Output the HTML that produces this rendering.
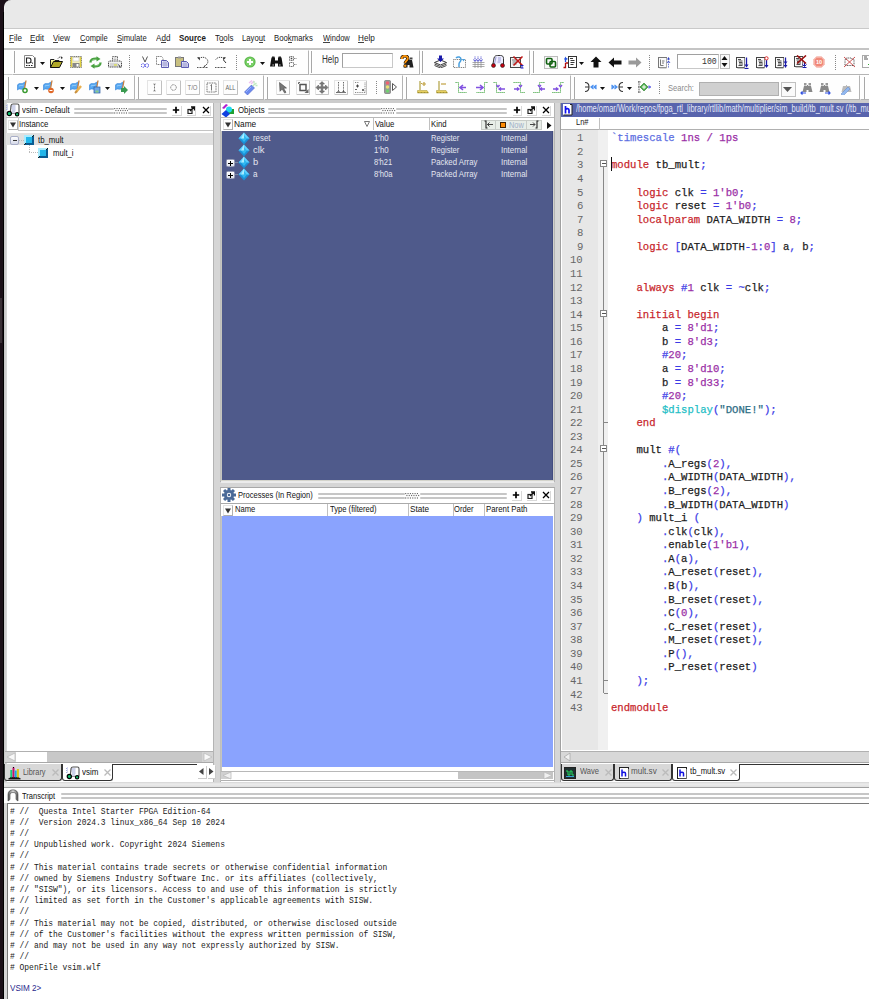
<!DOCTYPE html><html><head><meta charset="utf-8"><style>
*{margin:0;padding:0;box-sizing:border-box}
html,body{width:869px;height:999px;overflow:hidden;background:#d6d6d6;position:relative}
body>div,body>svg{position:absolute}
.t{white-space:pre;transform-origin:0 0;line-height:0;height:0}
i{font-style:normal}
</style></head><body>
<div style="left:0px;top:0px;width:869px;height:28px;background:#e9e9e9"></div>
<div style="left:0px;top:28px;width:869px;height:1px;background:#c9c9c9"></div>
<div style="left:0px;top:29px;width:869px;height:19px;background:#ffffff"></div>
<div style="left:0px;top:48px;width:869px;height:2px;background:#c4c4c4"></div>
<div style="left:0px;top:50px;width:869px;height:51px;background:#fefefe"></div>
<div style="left:0px;top:74px;width:869px;height:1px;background:#c8c8c8"></div>
<div style="left:0px;top:100px;width:869px;height:3px;background:#cccccc"></div>
<div class="t" style="left:8.55px;top:37.67px;font-size:9.9px;color:#1a1a1a;font-family:'Liberation Sans';transform:scaleX(0.8162);">File</div>
<div style="left:9px;top:42px;width:5px;height:1px;background:#444"></div>
<div class="t" style="left:29.75px;top:37.67px;font-size:9.9px;color:#1a1a1a;font-family:'Liberation Sans';transform:scaleX(0.8217);">Edit</div>
<div style="left:30px;top:42px;width:5px;height:1px;background:#444"></div>
<div class="t" style="left:53.36px;top:37.67px;font-size:9.9px;color:#1a1a1a;font-family:'Liberation Sans';transform:scaleX(0.7911);">View</div>
<div style="left:53px;top:42px;width:5px;height:1px;background:#444"></div>
<div class="t" style="left:79.62px;top:37.67px;font-size:9.9px;color:#1a1a1a;font-family:'Liberation Sans';transform:scaleX(0.7639);">Compile</div>
<div style="left:80px;top:42px;width:6px;height:1px;background:#444"></div>
<div class="t" style="left:116.66px;top:37.67px;font-size:9.9px;color:#1a1a1a;font-family:'Liberation Sans';transform:scaleX(0.7709);">Simulate</div>
<div style="left:117px;top:42px;width:5px;height:1px;background:#444"></div>
<div class="t" style="left:156.00px;top:37.67px;font-size:9.9px;color:#1a1a1a;font-family:'Liberation Sans';transform:scaleX(0.8187);">Add</div>
<div style="left:161px;top:42px;width:5px;height:1px;background:#444"></div>
<div class="t" style="left:179.06px;top:37.67px;font-size:9.9px;color:#1a1a1a;font-family:'Liberation Sans';font-weight:bold;transform:scaleX(0.8020);">Source</div>
<div style="left:194px;top:42px;width:3px;height:1px;background:#444"></div>
<div class="t" style="left:214.84px;top:37.67px;font-size:9.9px;color:#1a1a1a;font-family:'Liberation Sans';transform:scaleX(0.7974);">Tools</div>
<div style="left:220px;top:42px;width:4px;height:1px;background:#444"></div>
<div class="t" style="left:242.18px;top:37.67px;font-size:9.9px;color:#1a1a1a;font-family:'Liberation Sans';transform:scaleX(0.7797);">Layout</div>
<div style="left:259px;top:42px;width:4px;height:1px;background:#444"></div>
<div class="t" style="left:274.38px;top:37.67px;font-size:9.9px;color:#1a1a1a;font-family:'Liberation Sans';transform:scaleX(0.7857);">Bookmarks</div>
<div style="left:288px;top:42px;width:4px;height:1px;background:#444"></div>
<div class="t" style="left:322.66px;top:37.67px;font-size:9.9px;color:#1a1a1a;font-family:'Liberation Sans';transform:scaleX(0.7615);">Window</div>
<div style="left:323px;top:42px;width:7px;height:1px;background:#444"></div>
<div class="t" style="left:357.85px;top:37.67px;font-size:9.9px;color:#1a1a1a;font-family:'Liberation Sans';transform:scaleX(0.8248);">Help</div>
<div style="left:358px;top:42px;width:6px;height:1px;background:#444"></div>
<div style="left:11.5px;top:50px;width:297.5px;height:25px;border-left:1px solid #fff;border-top:1px solid #fff;border-right:1px solid #b4b4b4;border-bottom:1px solid #b4b4b4"></div>
<div style="left:309px;top:50px;width:111px;height:25px;border-left:1px solid #fff;border-top:1px solid #fff;border-right:1px solid #b4b4b4;border-bottom:1px solid #b4b4b4"></div>
<div style="left:420px;top:50px;width:110px;height:25px;border-left:1px solid #fff;border-top:1px solid #fff;border-right:1px solid #b4b4b4;border-bottom:1px solid #b4b4b4"></div>
<div style="left:530px;top:50px;width:350px;height:25px;border-left:1px solid #fff;border-top:1px solid #fff;border-right:1px solid #b4b4b4;border-bottom:1px solid #b4b4b4"></div>
<div style="left:13.5px;top:51px;width:2px;height:22px;border-left:1px solid #a8a8a8;border-right:1px solid #fff"></div>
<div style="left:311px;top:51px;width:2px;height:22px;border-left:1px solid #a8a8a8;border-right:1px solid #fff"></div>
<div style="left:422px;top:51px;width:2px;height:22px;border-left:1px solid #a8a8a8;border-right:1px solid #fff"></div>
<div style="left:533px;top:51px;width:2px;height:22px;border-left:1px solid #a8a8a8;border-right:1px solid #fff"></div>
<div style="left:5.5px;top:75px;width:129.5px;height:25px;border-left:1px solid #fff;border-top:1px solid #fff;border-right:1px solid #b4b4b4;border-bottom:1px solid #b4b4b4"></div>
<div style="left:135px;top:75px;width:129px;height:25px;border-left:1px solid #fff;border-top:1px solid #fff;border-right:1px solid #b4b4b4;border-bottom:1px solid #b4b4b4"></div>
<div style="left:264px;top:75px;width:139px;height:25px;border-left:1px solid #fff;border-top:1px solid #fff;border-right:1px solid #b4b4b4;border-bottom:1px solid #b4b4b4"></div>
<div style="left:403px;top:75px;width:168px;height:25px;border-left:1px solid #fff;border-top:1px solid #fff;border-right:1px solid #b4b4b4;border-bottom:1px solid #b4b4b4"></div>
<div style="left:571px;top:75px;width:289px;height:25px;border-left:1px solid #fff;border-top:1px solid #fff;border-right:1px solid #b4b4b4;border-bottom:1px solid #b4b4b4"></div>
<div style="left:860px;top:75px;width:20px;height:25px;border-left:1px solid #fff;border-top:1px solid #fff;border-right:1px solid #b4b4b4;border-bottom:1px solid #b4b4b4"></div>
<div style="left:7.5px;top:77px;width:2px;height:22px;border-left:1px solid #a8a8a8;border-right:1px solid #fff"></div>
<div style="left:137.5px;top:77px;width:2px;height:22px;border-left:1px solid #a8a8a8;border-right:1px solid #fff"></div>
<div style="left:266.5px;top:77px;width:2px;height:22px;border-left:1px solid #a8a8a8;border-right:1px solid #fff"></div>
<div style="left:405.5px;top:77px;width:2px;height:22px;border-left:1px solid #a8a8a8;border-right:1px solid #fff"></div>
<div style="left:574px;top:77px;width:2px;height:22px;border-left:1px solid #a8a8a8;border-right:1px solid #fff"></div>
<div style="left:864px;top:77px;width:2px;height:22px;border-left:1px solid #a8a8a8;border-right:1px solid #fff"></div>
<div style="left:129px;top:55px;width:1px;height:15px;background:repeating-linear-gradient(#888 0 1px,transparent 1px 2px)"></div>
<div style="left:236px;top:55px;width:1px;height:15px;background:repeating-linear-gradient(#888 0 1px,transparent 1px 2px)"></div>
<div style="left:649px;top:55px;width:1px;height:15px;background:repeating-linear-gradient(#888 0 1px,transparent 1px 2px)"></div>
<div style="left:834.5px;top:55px;width:1px;height:15px;background:repeating-linear-gradient(#888 0 1px,transparent 1px 2px)"></div>
<div style="left:375.5px;top:81px;width:1px;height:14px;background:repeating-linear-gradient(#888 0 1px,transparent 1px 2px)"></div>
<div style="left:659px;top:81px;width:1px;height:14px;background:repeating-linear-gradient(#888 0 1px,transparent 1px 2px)"></div>
<svg style="left:24px;top:55px" width="12" height="13" viewBox="0 0 12 13" shape-rendering="auto"><path d="M.5 .5h8l2 2v10h-10z" fill="#fff" stroke="#8a8a8a"/><path d="M11 2.5v10.5H1.5" fill="none" stroke="#444" stroke-width="1.2"/><path d="M2.5 3h2.5q2 0 2 2.5t-2 2.5h-2.5z" fill="none" stroke="#222" stroke-width="1.1"/><path d="M7.5 7.5l1.5 1" stroke="#222"/><path d="M2 10.5h6.5" stroke="#222" stroke-dasharray="1.5 1"/></svg>
<svg style="left:40px;top:62px" width="5" height="3" viewBox="0 0 5 3" shape-rendering="auto"><path d="M0 0h5l-2.5 3z" fill="#111"/></svg>
<svg style="left:49.5px;top:56px" width="13" height="12" viewBox="0 0 13 12" shape-rendering="auto"><path d="M.5 3.5h3.5l1 1h4v2" fill="#e8e860" stroke="#222"/><path d="M.5 3.5v8" stroke="#222"/><path d="M1 4.5h3.5v7H1z" fill="#f0f080"/><path d="M.5 11.5l3-6h9l-3 6z" fill="#b0a828" stroke="#111"/><path d="M8 2.5c1-1.5 2.5-2 4-1" fill="none" stroke="#333" stroke-dasharray="1 .6"/><path d="M11 .5l1.8 1.2-1.3 1.6z" fill="#111"/></svg>
<svg style="left:70px;top:55.5px" width="12" height="12" viewBox="0 0 12 12" shape-rendering="auto"><rect x=".5" y=".5" width="11" height="11" fill="#f4f0c0" stroke="#777" stroke-dasharray="1.2 .6"/><path d="M1.5 1v10M10.5 1v10" stroke="#e0d040" stroke-width="1.4"/><rect x="3" y="1.5" width="6" height="3.5" fill="#fff" stroke="#bbb" stroke-width=".5"/><rect x="2.5" y="7" width="7" height="4" fill="#888"/><rect x="6.5" y="8" width="2" height="2.5" fill="#fff"/></svg>
<svg style="left:88.5px;top:55.5px" width="13" height="13" viewBox="0 0 13 13" shape-rendering="auto"><path d="M1.5 6.5C1.5 3.5 4 2.5 8 2.8" fill="none" stroke="#48a040" stroke-width="2.4"/><path d="M7.5 .2l4 2.8-4 2.6z" fill="#48a040"/><path d="M11.5 6.5c0 3-2.5 4-6.5 3.7" fill="none" stroke="#48a040" stroke-width="2.4"/><path d="M5.5 12.8l-4-2.8 4-2.6z" fill="#48a040"/><path d="M2.5 5.5C3 4 4.5 3.3 7.5 3.3M10.5 7.5C10 9 8.5 9.7 5.5 9.7" fill="none" stroke="#a8e0a0" stroke-width=".7"/></svg>
<svg style="left:107.5px;top:55.5px" width="14" height="13" viewBox="0 0 14 13" shape-rendering="auto"><path d="M4.5 4.5V.5h5v4" fill="#fff" stroke="#555" stroke-dasharray="1 .6"/><path d="M5.5 2h3M5.5 3.5h3" stroke="#888" stroke-width=".6"/><path d="M2 5h10q1.5 0 1.5 1.5v4.5h-13v-4.5Q.5 5 2 5z" fill="#f0f0f0" stroke="#444" stroke-dasharray="1.2 .6"/><path d="M3 7v4M5 7v4M7 7v4M9 7v4" stroke="#999" stroke-width=".6"/><path d="M6 9h3" stroke="#e0e040" stroke-width="1.2"/><path d="M10.5 8.5l2 3" stroke="#333"/></svg>
<svg style="left:140.5px;top:55.5px" width="8" height="12" viewBox="0 0 8 12" shape-rendering="auto"><path d="M1.5 .5l2.5 5.5M6.5 .5L4 6" stroke="#555"/><circle cx="2" cy="9.5" r="1.8" fill="none" stroke="#2a2ae0" stroke-dasharray="1 .8"/><circle cx="6" cy="9.5" r="1.8" fill="none" stroke="#2a2ae0" stroke-dasharray="1 .8"/></svg>
<svg style="left:156px;top:55.5px" width="14" height="12" viewBox="0 0 14 12" shape-rendering="auto"><path d="M.5 .5h5l1.5 1.5v6.5h-6.5z" fill="#fff" stroke="#777" stroke-dasharray="1 .6"/><path d="M5.5 4.5h5l2 2v5h-7z" fill="#eef0ff" stroke="#5a5ab0"/><path d="M6 7h6M6 9h6M8 5v6.5M10 5v6.5" stroke="#8080c0" stroke-width=".6"/></svg>
<svg style="left:175px;top:55.5px" width="14" height="12" viewBox="0 0 14 12" shape-rendering="auto"><rect x=".5" y="1.5" width="8" height="9" fill="#c8c080" stroke="#777"/><rect x="3" y=".5" width="3" height="2" fill="#999"/><path d="M6.5 5.5h5l2 2v4h-7z" fill="#eef0ff" stroke="#5a5ab0"/><path d="M7 8h6M7 10h6M9 6v5.5M11 6v5.5" stroke="#8080c0" stroke-width=".6"/></svg>
<svg style="left:196px;top:55.5px" width="13" height="12" viewBox="0 0 13 12" shape-rendering="auto"><path d="M3 2.5c3-2 7-1.5 8.5 1.5 1 2 0 4-2 5.5" fill="none" stroke="#444" stroke-dasharray="1.2 .8"/><path d="M1 1.5l3 3-.5-3.5z" fill="#333"/><path d="M1 11.5h11" stroke="#555" stroke-dasharray="1 .5"/><path d="M9.5 9l-1.5 2" stroke="#333"/></svg>
<svg style="left:214px;top:55.5px" width="13" height="12" viewBox="0 0 13 12" shape-rendering="auto"><path d="M10 2.5c-3-2-7-1.5-8.5 1.5" fill="none" stroke="#444" stroke-dasharray="1.2 .8"/><path d="M12 1.5l-3 3 .5-3.5z" fill="#333"/><path d="M9.5 4l2.5 3" stroke="#333"/><path d="M1 11.5h11" stroke="#555" stroke-dasharray="1 .5"/></svg>
<svg style="left:243.5px;top:56px" width="12" height="12" viewBox="0 0 12 12" shape-rendering="auto"><circle cx="6" cy="6" r="5.6" fill="#5ab84a"/><circle cx="6" cy="6" r="4.5" fill="#7cd06a"/><path d="M6 3v6M3 6h6" stroke="#fff" stroke-width="2"/></svg>
<svg style="left:260px;top:62px" width="5" height="3" viewBox="0 0 5 3" shape-rendering="auto"><path d="M0 0h5l-2.5 3z" fill="#111"/></svg>
<svg style="left:269.5px;top:56px" width="13" height="12" viewBox="0 0 13 12" shape-rendering="auto"><path d="M1.5 1.5h3.5v3h3v-3h3.5l1.5 9h-5v-3h-3v3h-5z" fill="#111"/><circle cx="3.2" cy="9" r="1" fill="#777"/><circle cx="9.8" cy="9" r="1" fill="#777"/><rect x="2" y=".5" width="2.5" height="1.5" fill="#222"/><rect x="8.5" y=".5" width="2.5" height="1.5" fill="#222"/></svg>
<svg style="left:288.5px;top:56px" width="12" height="12" viewBox="0 0 12 12" shape-rendering="auto"><rect x=".5" y=".5" width="4" height="4" fill="none" stroke="#666" stroke-dasharray="1 .6"/><rect x="1.7" y="1.7" width="1.6" height="1.6" fill="#444"/><path d="M5 2.5h3" stroke="#888" stroke-dasharray="1 .5"/><rect x=".5" y="6.5" width="4" height="4" fill="none" stroke="#666" stroke-dasharray="1 .6"/><path d="M5 8.5h3" stroke="#888" stroke-dasharray="1 .5"/></svg>
<div class="t" style="left:321.85px;top:60.43px;font-size:10.01px;color:#333;font-family:'Liberation Sans';transform:scaleX(0.8106);">Help</div>
<div style="left:342px;top:53px;width:51px;height:15px;background:#fff;border:1px solid #c8c8c8;border-top-color:#a0a0a0;border-left-color:#a0a0a0"></div>
<svg style="left:399.5px;top:55px" width="14" height="13" viewBox="0 0 14 13" shape-rendering="auto"><path d="M5.5 5h2.5v-1h1.5v1h2.5l1.5 7.5h-4v-2.5h-2v2.5h-4z" fill="#222"/><rect x="6" y="2.5" width="2.5" height="2" fill="#444"/><rect x="10" y="2.5" width="2.5" height="2" fill="#444"/><path d="M1.8 4C1.8 1.8 3.3 1 4.8 1s3 .9 3 2.6c0 2.2-2.6 2.3-2.6 4.6" fill="none" stroke="#000" stroke-width="3.2"/><path d="M1.8 4C1.8 1.8 3.3 1 4.8 1s3 .9 3 2.6c0 2.2-2.6 2.3-2.6 4.6" fill="none" stroke="#f4900c" stroke-width="2"/><circle cx="5.2" cy="10.8" r="1.6" fill="#f4900c" stroke="#222" stroke-width=".6"/></svg>
<svg style="left:433.5px;top:55px" width="13" height="13" viewBox="0 0 13 13" shape-rendering="auto"><path d="M.5 7.5l6-2.5 6 2.5-6 2.5z" fill="#fff" stroke="#222" stroke-width=".9"/><path d="M.5 9l6 2.5 6-2.5M.5 10.5l6 2.5 6-2.5" fill="none" stroke="#333" stroke-width=".9"/><path d="M5 .5h3v3h2l-3.5 3.5L3 3.5h2z" fill="#1818a8"/></svg>
<svg style="left:452.5px;top:55.5px" width="13" height="12" viewBox="0 0 13 12" shape-rendering="auto"><rect x=".5" y="3.5" width="12" height="8" fill="none" stroke="#777" stroke-dasharray="1 .8"/><path d="M3 2c2-2 5-1 5 1.5S6 6 6 8v3" fill="none" stroke="#48a0e0" stroke-width="1.5"/><path d="M9 3l3 0-1.5 2.5" fill="#48a0e0"/></svg>
<svg style="left:471.5px;top:55.5px" width="13" height="12" viewBox="0 0 13 12" shape-rendering="auto"><path d="M.5 6.5h12M.5 8.5h12M.5 10.5h12M3 6v6M6 6v6M9 6v6" stroke="#888" stroke-width=".7"/><path d="M3 .5v4M6 .5v4M9 .5v4" stroke="#5050d0" stroke-dasharray="1 .6"/><path d="M1.5 3.5l1.5 2 1.5-2M4.5 3.5l1.5 2 1.5-2M7.5 3.5l1.5 2 1.5-2" fill="none" stroke="#5050d0"/></svg>
<svg style="left:490.5px;top:55px" width="14" height="13" viewBox="0 0 14 13" shape-rendering="auto"><path d="M2 9l1-6c.5-2 2-2.5 3.5-2.5h3c2 0 3 1 3 3v6" fill="#eef" stroke="#333"/><path d="M5 2l-1.5 7M7 3h3M7 5h3M6.5 7h3" stroke="#8888cc" stroke-width=".8"/><circle cx="2.5" cy="10.5" r="2" fill="#c00010" stroke="#222" stroke-width=".6"/><circle cx="11.5" cy="10.5" r="2" fill="#c00010" stroke="#222" stroke-width=".6"/></svg>
<svg style="left:509.5px;top:55.5px" width="14" height="13" viewBox="0 0 14 13" shape-rendering="auto"><rect x=".5" y="1.5" width="10" height="10" fill="#f4f4f4" stroke="#444"/><path d="M2 4h5M2.5 6h5M2.5 8h4" stroke="#555" stroke-width=".8"/><path d="M3.5 .5l9 9M12.5 .5l-9 9" stroke="#c01818" stroke-width="1.5"/><path d="M10.5 9.5h3M10.5 12h3M12 9.5v2.5" stroke="#2020c0"/></svg>
<svg style="left:543.5px;top:55.5px" width="14" height="13" viewBox="0 0 14 13" shape-rendering="auto"><rect x=".5" y=".5" width="13" height="12" fill="#f8f8f8" stroke="#bbb"/><rect x="2.5" y="2.5" width="5.5" height="5.5" rx="1" fill="none" stroke="#106010" stroke-width="1.6"/><rect x="6" y="5.5" width="5.5" height="5.5" rx="1" fill="none" stroke="#106010" stroke-width="1.6"/></svg>
<svg style="left:562.5px;top:55.5px" width="14" height="13" viewBox="0 0 14 13" shape-rendering="auto"><rect x="5.5" y=".5" width="8" height="11" fill="#fff" stroke="#333"/><path d="M7 2.5h3M7.5 4.5h4M7.5 6.5h4M7.5 8.5h3" stroke="#222" stroke-width=".9"/><path d="M2.5 6V2.8h2" fill="none" stroke="#2050e0" stroke-width="1.3"/><path d="M1 3.5l1.5-3 1.5 3z" fill="#2050e0"/><path d="M2.5 7v4.5H.5M2.5 7h2.5" fill="none" stroke="#b01010" stroke-width="1.3"/></svg>
<svg style="left:579px;top:62px" width="5" height="3" viewBox="0 0 5 3" shape-rendering="auto"><path d="M0 0h5l-2.5 3z" fill="#111"/></svg>
<svg style="left:590px;top:56px" width="12" height="12" viewBox="0 0 12 12" shape-rendering="auto"><path d="M6 .5l5.5 5.5h-3v5.5h-5v-5.5h-3z" fill="#111"/></svg>
<svg style="left:608px;top:56.5px" width="14" height="11" viewBox="0 0 14 11" shape-rendering="auto"><path d="M.5 5.5l5.5-5v3h7.5v4h-7.5v3z" fill="#111"/></svg>
<svg style="left:627.5px;top:56.5px" width="14" height="11" viewBox="0 0 14 11" shape-rendering="auto"><path d="M13.5 5.5l-5.5-5v3h-7.5v4h7.5v3z" fill="#999"/></svg>
<svg style="left:657.5px;top:55.5px" width="13" height="13" viewBox="0 0 13 13" shape-rendering="auto"><rect x=".5" y="1.5" width="8" height="10" fill="#fafafa" stroke="#777"/><path d="M8.5 2v10H1.5" fill="none" stroke="#aaa"/><path d="M2.5 3.5v6h3M4 5h2.5M4 7h2" fill="none" stroke="#555" stroke-width=".8"/><path d="M10.5 3v9" stroke="#6070d0" stroke-dasharray="1 .7"/><path d="M9 3.5l1.5-2.5 1.5 2.5z" fill="#3040c0"/><path d="M9 7l1.5-2 1.5 2" fill="none" stroke="#3040c0" stroke-width=".8"/></svg>
<div style="left:676.5px;top:53.5px;width:42px;height:15.5px;background:#fff;border:1px solid #c8c8c8;border-top-color:#a0a0a0;border-left-color:#a0a0a0"></div>
<div class="t" style="left:702.03px;top:62.27px;font-size:9.5px;color:#333;font-family:'Liberation Mono';transform:scaleX(0.8635);">100</div>
<div style="left:719.5px;top:53.5px;width:10px;height:15.5px;background:#fafafa;border:1px solid #bbb"></div>
<svg style="left:720px;top:54px" width="9" height="15" viewBox="0 0 9 15"><path d="M1.5 6l3-4 3 4z M1.5 9l3 4 3-4z" fill="#111"/></svg>
<svg style="left:736px;top:55.5px" width="13" height="13" viewBox="0 0 13 13" shape-rendering="auto"><rect x=".5" y="1.5" width="8" height="10" fill="#fafafa" stroke="#444"/><path d="M8.5 2v10H1.5" fill="none" stroke="#888"/><path d="M2 3.5h3M2.5 5h4M3 6.5h3.5M3 8h4M2.5 9.5h4" stroke="#222" stroke-width=".8"/><path d="M10.5 1.5v9" stroke="#1a1aa8" stroke-width="1.3"/><path d="M8.5 8.5l2 3 2-3z" fill="#1a1aa8"/><path d="M8.5 12.5h4" stroke="#1a1aa8" stroke-width="1.2"/></svg>
<svg style="left:755.5px;top:55.5px" width="13" height="13" viewBox="0 0 13 13" shape-rendering="auto"><rect x=".5" y="1.5" width="8" height="10" fill="#fafafa" stroke="#444"/><path d="M8.5 2v10H1.5" fill="none" stroke="#888"/><path d="M2 3.5h3M2.5 5h4M3 6.5h3.5M3 8h4M2.5 9.5h4" stroke="#222" stroke-width=".8"/><path d="M10.5 4v6.5" stroke="#1a1aa8" stroke-width="1.3"/><path d="M8.5 9l2 3 2-3z" fill="#1a1aa8"/><circle cx="10.5" cy="2.3" r="1.6" fill="#fff" stroke="#e03030"/></svg>
<svg style="left:775px;top:55.5px" width="13" height="13" viewBox="0 0 13 13" shape-rendering="auto"><rect x=".5" y="1.5" width="8" height="10" fill="#fafafa" stroke="#444"/><path d="M8.5 2v10H1.5" fill="none" stroke="#888"/><path d="M2 3.5h3M2.5 5h4M3 6.5h3.5M3 8h4M2.5 9.5h4" stroke="#222" stroke-width=".8"/><path d="M10.5 1.5v10" stroke="#1a1aa8" stroke-width="1.3"/><path d="M8.5 5.5l2 2.5 2-2.5zM8.5 9l2 2.5 2-2.5z" fill="#1a1aa8"/></svg>
<svg style="left:793.5px;top:55px" width="13" height="13" viewBox="0 0 13 13" shape-rendering="auto"><rect x=".5" y="1.5" width="8" height="10" fill="#fafafa" stroke="#444"/><path d="M8.5 2v10H1.5" fill="none" stroke="#888"/><path d="M2 3.5h3M2.5 5h4M3 6.5h3.5M3 8h4M2.5 9.5h4" stroke="#222" stroke-width=".8"/><path d="M10.5 7v4" stroke="#1a1aa8" stroke-width="1.2"/><path d="M8.5 12.5h4M8.5 9.5l2 2 2-2" stroke="#1a1aa8" fill="none"/><path d="M3 .5l9 8M12 .5l-9 8" stroke="#9a1010" stroke-width="1.6"/></svg>
<svg style="left:812.5px;top:56px" width="12" height="12" viewBox="0 0 12 12" shape-rendering="auto"><path d="M3.5.5h5l3 3v5l-3 3h-5l-3-3v-5z" fill="#f08878"/><path d="M3.8 1.3h4.4l2.5 2.5v4.4l-2.5 2.5H3.8L1.3 8.2V3.8z" fill="none" stroke="#fff" stroke-width=".6" opacity=".7"/><text x="6" y="8" font-size="5.5" font-family="Liberation Sans" fill="#fff" text-anchor="middle" font-weight="bold">10</text></svg>
<svg style="left:843px;top:56px" width="13" height="12" viewBox="0 0 13 12" shape-rendering="auto"><path d="M3.5 2h5l1 1.5h1.5v6H2V3.5h1.5z" fill="none" stroke="#555" stroke-dasharray="1 .7"/><path d="M1 1l11 10M12 1L1 11" stroke="#c84040" stroke-width=".9"/></svg>
<svg style="left:861.5px;top:55px" width="9" height="13" viewBox="0 0 9 13" shape-rendering="auto"><rect x=".5" y=".5" width="8" height="12" fill="#fff" stroke="#aaa"/><path d="M2 2h3M2 4h4" stroke="#555"/><path d="M6 9l3 3" stroke="#3a3"/></svg>
<svg style="left:17px;top:80px" width="14" height="14" viewBox="0 0 14 14" shape-rendering="auto"><path d="M.5 5c2-3 4 0 6.5-2.5L8.5 2 7 8.5C4.5 10.5 3 7.5.5 10z" fill="#58a8f0" stroke="#3080d8" stroke-width=".6"/><path d="M2 6c2-1 3 0 4.5-1" stroke="#a8d8ff" stroke-width=".8" fill="none"/><path d="M9 .5l-1.8 10" stroke="#c88040" stroke-width="1.3"/><circle cx="8" cy="10.5" r="2.8" fill="#3a9a30"/><circle cx="8" cy="10.5" r="1.3" fill="#fff"/></svg>
<svg style="left:43px;top:80px" width="14" height="14" viewBox="0 0 14 14" shape-rendering="auto"><path d="M.5 5c2-3 4 0 6.5-2.5L8.5 2 7 8.5C4.5 10.5 3 7.5.5 10z" fill="#58a8f0" stroke="#3080d8" stroke-width=".6"/><path d="M2 6c2-1 3 0 4.5-1" stroke="#a8d8ff" stroke-width=".8" fill="none"/><path d="M9 .5l-1.8 10" stroke="#c88040" stroke-width="1.3"/><circle cx="8" cy="10.5" r="2.8" fill="#e06828"/><path d="M6.5 10.5h3" stroke="#fff"/></svg>
<svg style="left:70px;top:80px" width="14" height="14" viewBox="0 0 14 14" shape-rendering="auto"><path d="M.5 5c2-3 4 0 6.5-2.5L8.5 2 7 8.5C4.5 10.5 3 7.5.5 10z" fill="#58a8f0" stroke="#3080d8" stroke-width=".6"/><path d="M2 6c2-1 3 0 4.5-1" stroke="#a8d8ff" stroke-width=".8" fill="none"/><path d="M9 .5l-1.8 10" stroke="#c88040" stroke-width="1.3"/><path d="M6 12l5-6" stroke="#e8b050" stroke-width="2.5"/><path d="M5 13l2-2" stroke="#c89040" stroke-width="2"/></svg>
<svg style="left:89px;top:80px" width="14" height="14" viewBox="0 0 14 14" shape-rendering="auto"><path d="M.5 5c2-3 4 0 6.5-2.5L8.5 2 7 8.5C4.5 10.5 3 7.5.5 10z" fill="#58a8f0" stroke="#3080d8" stroke-width=".6"/><path d="M2 6c2-1 3 0 4.5-1" stroke="#a8d8ff" stroke-width=".8" fill="none"/><path d="M9 .5l-1.8 10" stroke="#c88040" stroke-width="1.3"/><rect x="5" y="7" width="6" height="6" fill="#6fa8e8" stroke="#2a5aa0" stroke-width=".7"/><rect x="6.5" y="10.5" width="3" height="2" fill="#8c8"/></svg>
<svg style="left:115px;top:80px" width="14" height="14" viewBox="0 0 14 14" shape-rendering="auto"><path d="M.5 5c2-3 4 0 6.5-2.5L8.5 2 7 8.5C4.5 10.5 3 7.5.5 10z" fill="#58a8f0" stroke="#3080d8" stroke-width=".6"/><path d="M2 6c2-1 3 0 4.5-1" stroke="#a8d8ff" stroke-width=".8" fill="none"/><path d="M9 .5l-1.8 10" stroke="#c88040" stroke-width="1.3"/><path d="M6 8h3v-2l4 4-4 4v-2H6z" fill="#3a9a50"/></svg>
<svg style="left:33.5px;top:87px" width="5" height="3" viewBox="0 0 5 3" shape-rendering="auto"><path d="M0 0h5l-2.5 3z" fill="#111"/></svg>
<svg style="left:59.5px;top:87px" width="5" height="3" viewBox="0 0 5 3" shape-rendering="auto"><path d="M0 0h5l-2.5 3z" fill="#111"/></svg>
<svg style="left:105px;top:87px" width="5" height="3" viewBox="0 0 5 3" shape-rendering="auto"><path d="M0 0h5l-2.5 3z" fill="#111"/></svg>
<svg style="left:146.5px;top:79.5px" width="15" height="15" viewBox="0 0 15 15" shape-rendering="auto"><rect x=".5" y=".5" width="14" height="14" fill="#fdfdfd" stroke="#e4e4e4"/><path d="M1 14.5h13.5V1" stroke="#c0c0c0" fill="none"/><path d="M7.5 4v7M6.5 4h2M6.5 11h2" stroke="#777" stroke-dasharray="1 .5"/></svg>
<svg style="left:165.5px;top:79.5px" width="15" height="15" viewBox="0 0 15 15" shape-rendering="auto"><rect x=".5" y=".5" width="14" height="14" fill="#fdfdfd" stroke="#e4e4e4"/><path d="M1 14.5h13.5V1" stroke="#c0c0c0" fill="none"/><circle cx="7.5" cy="7.5" r="2.8" fill="none" stroke="#777" stroke-dasharray="1 .6"/></svg>
<svg style="left:184.5px;top:79.5px" width="15" height="15" viewBox="0 0 15 15" shape-rendering="auto"><rect x=".5" y=".5" width="14" height="14" fill="#fdfdfd" stroke="#e4e4e4"/><path d="M1 14.5h13.5V1" stroke="#c0c0c0" fill="none"/><text x="7.5" y="10.5" font-size="7.5" font-family="Liberation Sans" text-anchor="middle" fill="#777" transform="translate(7.5 0) scale(.8 1) translate(-7.5 0)">T/O</text></svg>
<svg style="left:203.5px;top:79.5px" width="15" height="15" viewBox="0 0 15 15" shape-rendering="auto"><rect x=".5" y=".5" width="14" height="14" fill="#fdfdfd" stroke="#e4e4e4"/><path d="M1 14.5h13.5V1" stroke="#c0c0c0" fill="none"/><rect x="3" y="3" width="9" height="9" fill="none" stroke="#666" stroke-dasharray="1 .7"/><path d="M6.5 5.5l1-1v6" fill="none" stroke="#777"/></svg>
<svg style="left:223px;top:79.5px" width="15" height="15" viewBox="0 0 15 15" shape-rendering="auto"><rect x=".5" y=".5" width="14" height="14" fill="#fdfdfd" stroke="#e4e4e4"/><path d="M1 14.5h13.5V1" stroke="#c0c0c0" fill="none"/><text x="7.5" y="10.5" font-size="7.5" font-family="Liberation Sans" text-anchor="middle" fill="#666" transform="translate(7.5 0) scale(.75 1) translate(-7.5 0)">ALL</text></svg>
<svg style="left:242.5px;top:79.5px" width="15" height="15" viewBox="0 0 15 15" shape-rendering="auto"><path d="M1.5 12l7-7 3 3-7 7z" fill="#6a8af0" stroke="#4a60c8" stroke-width=".6"/><path d="M3 12l5-5" stroke="#a8c0ff" stroke-width=".8"/><path d="M6 3l3-2.5M8 4l3-3" stroke="#f0c0f0" stroke-width="1.3"/><path d="M9.5 6l4-3M11 3.5v-2.5M12.5 5.5h2" stroke="#c0e8c0" stroke-width="1.3"/></svg>
<svg style="left:276.4px;top:79.5px" width="14" height="15" viewBox="0 0 14 15" shape-rendering="auto"><rect x=".5" y=".5" width="13" height="14" fill="#fdfdfd" stroke="#e4e4e4"/><path d="M1 14.5h12.5V1" stroke="#c4c4c4" fill="none"/><path d="M3.5 2.5l7 5.5-3 .3 2.5 4-1.3.8-2.5-4-2.2 2.2z" fill="#777" stroke="#444" stroke-width=".6"/></svg>
<svg style="left:296.2px;top:79.5px" width="14" height="15" viewBox="0 0 14 15" shape-rendering="auto"><rect x=".5" y=".5" width="13" height="14" fill="#fdfdfd" stroke="#e4e4e4"/><path d="M1 14.5h12.5V1" stroke="#c4c4c4" fill="none"/><path d="M4 2.5H2.5V4" stroke="#666" fill="none"/><rect x="4" y="4.5" width="6" height="6" fill="none" stroke="#555" stroke-width="1.5"/><path d="M8.5 13l4-4v4z" fill="#666"/></svg>
<svg style="left:315.2px;top:79.5px" width="14" height="15" viewBox="0 0 14 15" shape-rendering="auto"><rect x=".5" y=".5" width="13" height="14" fill="#fdfdfd" stroke="#e4e4e4"/><path d="M1 14.5h12.5V1" stroke="#c4c4c4" fill="none"/><path d="M7 1.5l2.5 2.5h-1.7v2.7h2.7V5l2.5 2.5-2.5 2.5V8.3H7.8V11h1.7L7 13.5 4.5 11h1.7V8.3H3.5V10L1 7.5 3.5 5v1.7h2.7V4H4.5z" fill="#777" stroke="#555" stroke-width=".5"/></svg>
<svg style="left:334.2px;top:79.5px" width="14" height="15" viewBox="0 0 14 15" shape-rendering="auto"><rect x=".5" y=".5" width="13" height="14" fill="#fdfdfd" stroke="#e4e4e4"/><path d="M1 14.5h12.5V1" stroke="#c4c4c4" fill="none"/><path d="M4.5 2v9M9.5 2v9" stroke="#666" stroke-dasharray="1 .6"/><path d="M2 12.5h10" stroke="#777"/><path d="M3 12.5l1.5-1.5 1.5 1.5" fill="none" stroke="#555"/><path d="M8.5 11.5h2" stroke="#555"/></svg>
<svg style="left:353.2px;top:79.5px" width="14" height="15" viewBox="0 0 14 15" shape-rendering="auto"><rect x=".5" y=".5" width="13" height="14" fill="#fdfdfd" stroke="#e4e4e4"/><path d="M1 14.5h12.5V1" stroke="#c4c4c4" fill="none"/><path d="M2 2.5h4M2 12.5h10M12 2.5v10" stroke="#888" stroke-dasharray="1 .8"/><path d="M3 6h3M4.5 4.5v3" stroke="#444"/><circle cx="10" cy="10" r="1" fill="#444"/><path d="M2 9.5h2" stroke="#666"/></svg>
<svg style="left:383.5px;top:80px" width="13" height="14" viewBox="0 0 13 14" shape-rendering="auto"><rect x=".5" y=".5" width="6" height="13" rx="1" fill="#999" stroke="#666" stroke-width=".6"/><circle cx="3.5" cy="3" r="1.8" fill="#f06070"/><circle cx="3.5" cy="7" r="1.8" fill="#e8e070"/><circle cx="3.5" cy="11" r="1.8" fill="#70d070"/><path d="M8.5 3.5l4 3.5-4 3.5z" fill="none" stroke="#555"/></svg>
<svg style="left:417px;top:80px" width="12" height="14" viewBox="0 0 12 14" shape-rendering="auto"><path d="M3 1v9" stroke="#b0a040" stroke-width="1.2"/><path d="M.5 10.5h9.5l1.5 2.5H.5z" fill="#e8d060" stroke="#b0a040" stroke-width=".6"/><path d="M1 12.5h10" stroke="#a09030" stroke-dasharray="1 .5"/><path d="M5 4h4M7 2v4" stroke="#c0a040" stroke-width="1.2"/><path d="M4 3.5h1" stroke="#c0a040"/></svg>
<svg style="left:436px;top:80px" width="12" height="14" viewBox="0 0 12 14" shape-rendering="auto"><path d="M3 1v9" stroke="#b0a040" stroke-width="1.2"/><path d="M.5 10.5h9.5l1.5 2.5H.5z" fill="#e8d060" stroke="#b0a040" stroke-width=".6"/><path d="M1 12.5h10" stroke="#a09030" stroke-dasharray="1 .5"/><path d="M5 4h5" stroke="#c0a040" stroke-width="1.2"/></svg>
<svg style="left:454.5px;top:80.5px" width="14" height="13" viewBox="0 0 14 13" shape-rendering="auto"><path d="M.5 1.5h3v10h8" fill="none" stroke="#48a848" stroke-dasharray="1.2 .8"/><path d="M5 6.5h6M8 4l-3 2.5 3 2.5" fill="none" stroke="#8050e0" stroke-width="1.6"/></svg>
<svg style="left:473.5px;top:80.5px" width="14" height="13" viewBox="0 0 14 13" shape-rendering="auto"><path d="M13.5 1.5h-3v10h-8" fill="none" stroke="#48a848" stroke-dasharray="1.2 .8"/><path d="M2 6.5h6M6 4l3 2.5-3 2.5" fill="none" stroke="#8050e0" stroke-width="1.6"/></svg>
<svg style="left:492.5px;top:80.5px" width="14" height="13" viewBox="0 0 14 13" shape-rendering="auto"><path d="M.5 1.5h3v10h9" fill="none" stroke="#48a848" stroke-dasharray="1.2 .8"/><path d="M3.5 4l1.5 2 1.5-2M6 8h6M8 6.5l-2 1.5 2 1.5" fill="none" stroke="#8050e0" stroke-width="1.3"/></svg>
<svg style="left:512.5px;top:80.5px" width="14" height="13" viewBox="0 0 14 13" shape-rendering="auto"><path d="M.5 1.5h7v10h5" fill="none" stroke="#48a848" stroke-dasharray="1.2 .8"/><path d="M6 4l1.5 2 1.5-2M1 8h5M4 6.5l2 1.5-2 1.5" fill="none" stroke="#8050e0" stroke-width="1.3"/></svg>
<svg style="left:532px;top:80.5px" width="14" height="13" viewBox="0 0 14 13" shape-rendering="auto"><path d="M12.5 1.5h-5v10h-7" fill="none" stroke="#48a848" stroke-dasharray="1.2 .8"/><path d="M6 4l1.5 2 1.5-2M8 8h5M10 6.5l-2 1.5 2 1.5" fill="none" stroke="#8050e0" stroke-width="1.3"/></svg>
<svg style="left:551px;top:80.5px" width="14" height="13" viewBox="0 0 14 13" shape-rendering="auto"><path d="M12.5 1.5h-3v10h-9" fill="none" stroke="#48a848" stroke-dasharray="1.2 .8"/><path d="M8 4l1.5 2 1.5-2M2 8h5M5 6.5l2 1.5-2 1.5" fill="none" stroke="#8050e0" stroke-width="1.3"/></svg>
<svg style="left:584px;top:80px" width="14" height="14" viewBox="0 0 14 14" shape-rendering="auto"><path d="M1 2.5c2.5 0 4 1.5 4 4.5s-1.5 4.5-4 4.5" fill="none" stroke="#333" stroke-width="1.1"/><path d="M1 7h4" stroke="#333"/><path d="M13 7H7M9.5 5L7 7l2.5 2M12.5 5L10 7l2.5 2" fill="none" stroke="#4a90f0" stroke-width="1.2"/></svg>
<svg style="left:600px;top:87px" width="5" height="3" viewBox="0 0 5 3" shape-rendering="auto"><path d="M0 0h5l-2.5 3z" fill="#111"/></svg>
<svg style="left:610px;top:80px" width="14" height="14" viewBox="0 0 14 14" shape-rendering="auto"><path d="M13 2.5c-2.5 0-4 1.5-4 4.5s1.5 4.5 4 4.5" fill="none" stroke="#333" stroke-width="1.1"/><path d="M13 7H9" stroke="#333"/><path d="M1 7h6M4.5 5L7 7l-2.5 2M1.5 5L4 7 1.5 9" fill="none" stroke="#4a90f0" stroke-width="1.2"/></svg>
<svg style="left:626.5px;top:87px" width="5" height="3" viewBox="0 0 5 3" shape-rendering="auto"><path d="M0 0h5l-2.5 3z" fill="#111"/></svg>
<svg style="left:637px;top:80px" width="14" height="14" viewBox="0 0 14 14" shape-rendering="auto"><path d="M1 2h3M1 7h3M1 12h3M2 1v12" stroke="#555" stroke-dasharray="1 .6"/><path d="M7 3l4 4-4 4-4-4z" fill="#50b050" stroke="#2a7a2a" stroke-width=".6"/><path d="M7 5v4M5 7h4" stroke="#fff"/><path d="M11 7h2.5M12 5.5l1.5 1.5-1.5 1.5" fill="none" stroke="#4040e0"/></svg>
<div class="t" style="left:668.46px;top:87.67px;font-size:9.9px;color:#8a8a8a;font-family:'Liberation Sans';transform:scaleX(0.7629);">Search:</div>
<div style="left:699px;top:82px;width:80px;height:14px;background:#d0d0d0;border:1px solid #b0b0b0"></div>
<div style="left:780.5px;top:82px;width:15px;height:15px;background:#fafafa;border:1px solid #c0c0c0"></div>
<svg style="left:782px;top:86px" width="11" height="7" viewBox="0 0 11 7"><path d="M1 1h9l-4.5 5z" fill="#555"/></svg>
<svg style="left:800px;top:81px" width="14" height="14" viewBox="0 0 14 14" shape-rendering="auto"><path d="M4 5h3v-1h1v1h3l1.5 6h-4v-2h-2v2h-4z" fill="#888"/><rect x="4" y="2" width="2.5" height="2.5" fill="#999"/><rect x="8.5" y="2" width="2.5" height="2.5" fill="#999"/><path d="M1 12h5M2.5 10.5L1 12l1.5 1.5" fill="none" stroke="#3050e0" stroke-width="1.2"/></svg>
<svg style="left:817px;top:81px" width="14" height="14" viewBox="0 0 14 14" shape-rendering="auto"><path d="M4 5h3v-1h1v1h3l1.5 6h-4v-2h-2v2h-4z" fill="#888"/><rect x="4" y="2" width="2.5" height="2.5" fill="#999"/><rect x="8.5" y="2" width="2.5" height="2.5" fill="#999"/><path d="M8 12h5M11.5 10.5L13 12l-1.5 1.5" fill="none" stroke="#3050e0" stroke-width="1.2"/></svg>
<svg style="left:838.5px;top:81px" width="14" height="14" viewBox="0 0 14 14" shape-rendering="auto"><path d="M4 5h3v-1h1v1h3l1.5 6h-4v-2h-2v2h-4z" fill="#bbb"/><path d="M2 13l7-7 2 2-7 7z" fill="#90b8f0" stroke="#6080c0" stroke-width=".5"/></svg>
<div style="left:4px;top:102.5px;width:210px;height:680px;background:#fff;border-right:1px solid #b4b4b4"></div>
<div style="left:4px;top:102.5px;width:2.5px;height:680px;background:linear-gradient(90deg,#c4c4c4,#dadada)"></div>
<div style="left:6px;top:117px;width:207px;height:1px;background:#b8b8b8"></div>
<div style="left:18px;top:130px;width:195px;height:1px;background:#c4c4c4"></div>
<div style="left:6px;top:133px;width:207px;height:12px;background:#e0e0e0"></div>
<div class="t" style="left:21.96px;top:109.67px;font-size:9.9px;color:#111;font-family:'Liberation Sans';transform:scaleX(0.7882);">vsim - Default</div>
<div class="t" style="left:18.90px;top:123.67px;font-size:9.9px;color:#111;font-family:'Liberation Sans';transform:scaleX(0.7870);">Instance</div>
<div class="t" style="left:38.48px;top:139.67px;font-size:9.9px;color:#111;font-family:'Liberation Sans';transform:scaleX(0.7882);">tb_mult</div>
<div class="t" style="left:53.30px;top:152.67px;font-size:9.9px;color:#111;font-family:'Liberation Sans';transform:scaleX(0.7810);">mult_i</div>
<div style="left:5px;top:750.5px;width:208px;height:12px;background:#c8c8c8;border-top:1px solid #b0b0b0;border-bottom:1px solid #a8a8a8"></div>
<div style="left:5px;top:751.5px;width:11px;height:10px;background:#d4d4d4"></div>
<div style="left:202px;top:751.5px;width:11px;height:10px;background:#d4d4d4"></div>
<div style="left:16px;top:751.5px;width:31px;height:10px;background:#fff"></div>
<div style="left:4px;top:764px;width:58px;height:17px;background:#d8d8d8;border:1px solid #333;border-top:none;border-radius:0 0 3px 3px"></div>
<div style="left:62px;top:764px;width:51px;height:17px;background:#fff;border:1px solid #333;border-top:none;border-radius:0 0 3px 3px"></div>
<div style="left:113px;top:764px;width:84px;height:17px;background:#fff;border-top:1px solid #333"></div>
<div class="t" style="left:23.41px;top:771.67px;font-size:9.9px;color:#555;font-family:'Liberation Sans';transform:scaleX(0.7470);">Library</div>
<div class="t" style="left:81.56px;top:771.67px;font-size:9.9px;color:#111;font-family:'Liberation Sans';transform:scaleX(0.8091);">vsim</div>
<div style="left:220px;top:102.5px;width:335px;height:379.5px;background:#fff;border-left:1px solid #b0b0b0;border-right:1px solid #b4b4b4"></div>
<div style="left:221px;top:117px;width:333px;height:1px;background:#b8b8b8"></div>
<div style="left:222px;top:131px;width:330.5px;height:349px;background:#4f5a8b;box-shadow:inset -1px 0 0 #434c80"></div>
<div style="left:219.5px;top:131px;width:2.5px;height:350px;background:linear-gradient(90deg,#bcbcbc,#c8c8c0)"></div>
<div style="left:221px;top:479.5px;width:333px;height:1.5px;background:#d4d4cc"></div>
<div style="left:221px;top:481px;width:333px;height:1.5px;background:#ececec"></div>
<div style="left:552.5px;top:131px;width:1.5px;height:350px;background:#d0d0cc"></div>
<div class="t" style="left:237.65px;top:109.67px;font-size:9.9px;color:#111;font-family:'Liberation Sans';transform:scaleX(0.7934);">Objects</div>
<div class="t" style="left:234.13px;top:123.67px;font-size:9.9px;color:#111;font-family:'Liberation Sans';transform:scaleX(0.8431);">Name</div>
<div class="t" style="left:374.66px;top:123.67px;font-size:9.9px;color:#111;font-family:'Liberation Sans';transform:scaleX(0.7898);">Value</div>
<div class="t" style="left:431.08px;top:123.67px;font-size:9.9px;color:#111;font-family:'Liberation Sans';transform:scaleX(0.7841);">Kind</div>
<div class="t" style="left:253.29px;top:138.17px;font-size:9.9px;color:#e4e6f0;font-family:'Liberation Sans';transform:scaleX(0.7940);">reset</div>
<div class="t" style="left:374.21px;top:138.17px;font-size:9.9px;color:#e4e6f0;font-family:'Liberation Sans';transform:scaleX(0.7965);">1'h0</div>
<div class="t" style="left:431.29px;top:138.17px;font-size:9.9px;color:#e4e6f0;font-family:'Liberation Sans';transform:scaleX(0.7719);">Register</div>
<div class="t" style="left:500.89px;top:138.17px;font-size:9.9px;color:#e4e6f0;font-family:'Liberation Sans';transform:scaleX(0.8005);">Internal</div>
<div class="t" style="left:253.42px;top:150.17px;font-size:9.9px;color:#e4e6f0;font-family:'Liberation Sans';transform:scaleX(0.9587);">clk</div>
<div class="t" style="left:374.21px;top:150.17px;font-size:9.9px;color:#e4e6f0;font-family:'Liberation Sans';transform:scaleX(0.7965);">1'h0</div>
<div class="t" style="left:431.29px;top:150.17px;font-size:9.9px;color:#e4e6f0;font-family:'Liberation Sans';transform:scaleX(0.7719);">Register</div>
<div class="t" style="left:500.89px;top:150.17px;font-size:9.9px;color:#e4e6f0;font-family:'Liberation Sans';transform:scaleX(0.8005);">Internal</div>
<div class="t" style="left:253.19px;top:162.17px;font-size:9.9px;color:#e4e6f0;font-family:'Liberation Sans';transform:scaleX(0.9428);">b</div>
<div class="t" style="left:374.46px;top:162.17px;font-size:9.9px;color:#e4e6f0;font-family:'Liberation Sans';transform:scaleX(0.7603);">8'h21</div>
<div class="t" style="left:431.27px;top:162.17px;font-size:9.9px;color:#e4e6f0;font-family:'Liberation Sans';transform:scaleX(0.7898);">Packed Array</div>
<div class="t" style="left:500.89px;top:162.17px;font-size:9.9px;color:#e4e6f0;font-family:'Liberation Sans';transform:scaleX(0.8005);">Internal</div>
<div class="t" style="left:253.47px;top:174.17px;font-size:9.9px;color:#e4e6f0;font-family:'Liberation Sans';transform:scaleX(0.8238);">a</div>
<div class="t" style="left:374.45px;top:174.17px;font-size:9.9px;color:#e4e6f0;font-family:'Liberation Sans';transform:scaleX(0.7757);">8'h0a</div>
<div class="t" style="left:431.27px;top:174.17px;font-size:9.9px;color:#e4e6f0;font-family:'Liberation Sans';transform:scaleX(0.7898);">Packed Array</div>
<div class="t" style="left:500.89px;top:174.17px;font-size:9.9px;color:#e4e6f0;font-family:'Liberation Sans';transform:scaleX(0.8005);">Internal</div>
<div style="left:220px;top:487px;width:335px;height:295px;background:#fff;border-left:1px solid #b0b0b0;border-right:1px solid #b4b4b4;border-top:1px solid #a8a8a8"></div>
<div style="left:221px;top:503px;width:333px;height:1px;background:#aaaaaa"></div>
<div style="left:222px;top:516px;width:331px;height:251px;background:#8aa3fe"></div>
<div style="left:219.5px;top:516px;width:2.5px;height:265px;background:linear-gradient(90deg,#bcbcbc,#c8c8c0)"></div>
<div style="left:221px;top:770.5px;width:333px;height:10px;background:#fff;border-top:1px solid #b8b8b8;border-bottom:1.5px solid #b0b0b0"></div>
<div style="left:458px;top:771.5px;width:95px;height:7.5px;background:#c4c4c4"></div>
<div style="left:221px;top:771.5px;width:10px;height:7.5px;background:#d0d0d0"></div>
<div class="t" style="left:238.19px;top:495.27px;font-size:9.9px;color:#111;font-family:'Liberation Sans';transform:scaleX(0.7656);">Processes (In Region)</div>
<div class="t" style="left:234.89px;top:509.07px;font-size:9.9px;color:#111;font-family:'Liberation Sans';transform:scaleX(0.7715);">Name</div>
<div class="t" style="left:330.25px;top:509.07px;font-size:9.9px;color:#111;font-family:'Liberation Sans';transform:scaleX(0.7706);">Type (filtered)</div>
<div class="t" style="left:410.33px;top:509.07px;font-size:9.9px;color:#111;font-family:'Liberation Sans';transform:scaleX(0.8279);">State</div>
<div class="t" style="left:454.36px;top:509.07px;font-size:9.9px;color:#111;font-family:'Liberation Sans';transform:scaleX(0.7692);">Order</div>
<div class="t" style="left:485.97px;top:509.07px;font-size:9.9px;color:#111;font-family:'Liberation Sans';transform:scaleX(0.7947);">Parent Path</div>
<div style="left:560px;top:102.5px;width:309px;height:680px;background:#fff;border-left:1px solid #a0a0a0"></div>
<div style="left:561px;top:103px;width:308px;height:14px;background:#5864ad"></div>
<div class="t" style="left:575.70px;top:108.90px;font-size:10.4px;color:#e4e8f8;font-family:'Liberation Sans';transform:scaleX(0.7185);">/home/omar/Work/repos/fpga_rtl_library/rtllib/math/multiplier/sim_build/tb_mult.sv<i> (/tb_mult)</i></div>
<div style="left:561px;top:117px;width:308px;height:13px;background:#fff;border-bottom:1px solid #b0b0b0"></div>
<div class="t" style="left:575.60px;top:122.27px;font-size:9.9px;color:#222;font-family:'Liberation Sans';transform:scaleX(0.7544);">Ln#</div>
<div style="left:562px;top:130px;width:36px;height:620px;background:#e7e7e7"></div>
<div style="left:598px;top:130px;width:10px;height:620px;background:#f0f0f0"></div>
<div style="left:608px;top:130px;width:261px;height:620px;background:#fff"></div>
<div style="left:561px;top:750.5px;width:308px;height:12px;background:#d8d8d8;border-top:1px solid #b0b0b0;border-bottom:1px solid #a8a8a8"></div>
<div style="left:561px;top:764px;width:308px;height:18px;background:#fff;border-top:1px solid #333"></div>
<div style="left:561px;top:764px;width:53px;height:17px;background:#d8d8d8;border:1px solid #333;border-top:none;border-radius:0 0 3px 3px"></div>
<div style="left:614px;top:764px;width:58px;height:17px;background:#d8d8d8;border:1px solid #333;border-top:none;border-radius:0 0 3px 3px"></div>
<div style="left:672px;top:764px;width:68px;height:17px;background:#fff;border:1px solid #333;border-top:none;border-radius:0 0 3px 3px"></div>
<div class="t" style="left:579.96px;top:771.17px;font-size:9.9px;color:#555;font-family:'Liberation Sans';transform:scaleX(0.7647);">Wave</div>
<div class="t" style="left:630.97px;top:771.17px;font-size:9.9px;color:#555;font-family:'Liberation Sans';transform:scaleX(0.8224);">mult.sv</div>
<div class="t" style="left:689.88px;top:771.17px;font-size:9.9px;color:#111;font-family:'Liberation Sans';transform:scaleX(0.7796);">tb_mult.sv</div>
<div class="t" style="left:576.63px;top:138.24px;font-size:11.5px;color:#666;font-family:'Liberation Mono';transform:scaleX(0.9232);">1</div>
<div class="t" style="left:610.89px;top:138.24px;font-size:11.5px;color:#111;font-family:'Liberation Mono';transform:scaleX(0.9232);-webkit-text-stroke:0.25px;"><i style="color:#5c6ee2">`timescale</i> <i style="color:#9a2ea6">1ns</i> <i style="color:#9a2ea6">/</i> <i style="color:#9a2ea6">1ps</i></div>
<div class="t" style="left:576.63px;top:151.81px;font-size:11.5px;color:#666;font-family:'Liberation Mono';transform:scaleX(0.9232);">2</div>
<div class="t" style="left:576.63px;top:165.38px;font-size:11.5px;color:#666;font-family:'Liberation Mono';transform:scaleX(0.9232);">3</div>
<div class="t" style="left:610.89px;top:165.38px;font-size:11.5px;color:#111;font-family:'Liberation Mono';transform:scaleX(0.9232);-webkit-text-stroke:0.25px;"><i style="color:#c8262c">module</i> <i style="color:#1c1c1c">tb_mult</i><i style="color:#3c3ce6">;</i></div>
<div class="t" style="left:576.63px;top:178.95px;font-size:11.5px;color:#666;font-family:'Liberation Mono';transform:scaleX(0.9232);">4</div>
<div class="t" style="left:576.63px;top:192.52px;font-size:11.5px;color:#666;font-family:'Liberation Mono';transform:scaleX(0.9232);">5</div>
<div class="t" style="left:610.89px;top:192.52px;font-size:11.5px;color:#111;font-family:'Liberation Mono';transform:scaleX(0.9232);-webkit-text-stroke:0.25px;">    <i style="color:#c8262c">logic</i> <i style="color:#1c1c1c">clk</i> <i style="color:#3c3ce6">=</i> <i style="color:#9a2ea6">1'b0</i><i style="color:#3c3ce6">;</i></div>
<div class="t" style="left:576.63px;top:206.09px;font-size:11.5px;color:#666;font-family:'Liberation Mono';transform:scaleX(0.9232);">6</div>
<div class="t" style="left:610.89px;top:206.09px;font-size:11.5px;color:#111;font-family:'Liberation Mono';transform:scaleX(0.9232);-webkit-text-stroke:0.25px;">    <i style="color:#c8262c">logic</i> <i style="color:#1c1c1c">reset</i> <i style="color:#3c3ce6">=</i> <i style="color:#9a2ea6">1'b0</i><i style="color:#3c3ce6">;</i></div>
<div class="t" style="left:576.63px;top:219.66px;font-size:11.5px;color:#666;font-family:'Liberation Mono';transform:scaleX(0.9232);">7</div>
<div class="t" style="left:610.89px;top:219.66px;font-size:11.5px;color:#111;font-family:'Liberation Mono';transform:scaleX(0.9232);-webkit-text-stroke:0.25px;">    <i style="color:#c8262c">localparam</i> <i style="color:#1c1c1c">DATA_WIDTH</i> <i style="color:#3c3ce6">=</i> <i style="color:#9a2ea6">8</i><i style="color:#3c3ce6">;</i></div>
<div class="t" style="left:576.63px;top:233.23px;font-size:11.5px;color:#666;font-family:'Liberation Mono';transform:scaleX(0.9232);">8</div>
<div class="t" style="left:576.63px;top:246.80px;font-size:11.5px;color:#666;font-family:'Liberation Mono';transform:scaleX(0.9232);">9</div>
<div class="t" style="left:610.89px;top:246.80px;font-size:11.5px;color:#111;font-family:'Liberation Mono';transform:scaleX(0.9232);-webkit-text-stroke:0.25px;">    <i style="color:#c8262c">logic</i> <i style="color:#3c3ce6">[</i><i style="color:#1c1c1c">DATA_WIDTH</i><i style="color:#3c3ce6">-</i><i style="color:#9a2ea6">1</i><i style="color:#3c3ce6">:</i><i style="color:#9a2ea6">0</i><i style="color:#3c3ce6">]</i> <i style="color:#1c1c1c">a</i><i style="color:#3c3ce6">,</i> <i style="color:#1c1c1c">b</i><i style="color:#3c3ce6">;</i></div>
<div class="t" style="left:570.26px;top:260.37px;font-size:11.5px;color:#666;font-family:'Liberation Mono';transform:scaleX(0.9232);">10</div>
<div class="t" style="left:570.26px;top:273.94px;font-size:11.5px;color:#666;font-family:'Liberation Mono';transform:scaleX(0.9232);">11</div>
<div class="t" style="left:570.26px;top:287.51px;font-size:11.5px;color:#666;font-family:'Liberation Mono';transform:scaleX(0.9232);">12</div>
<div class="t" style="left:610.89px;top:287.51px;font-size:11.5px;color:#111;font-family:'Liberation Mono';transform:scaleX(0.9232);-webkit-text-stroke:0.25px;">    <i style="color:#c8262c">always</i> <i style="color:#3c3ce6">#</i><i style="color:#9a2ea6">1</i> <i style="color:#1c1c1c">clk</i> <i style="color:#3c3ce6">=</i> <i style="color:#3c3ce6">~</i><i style="color:#1c1c1c">clk</i><i style="color:#3c3ce6">;</i></div>
<div class="t" style="left:570.26px;top:301.08px;font-size:11.5px;color:#666;font-family:'Liberation Mono';transform:scaleX(0.9232);">13</div>
<div class="t" style="left:570.26px;top:314.65px;font-size:11.5px;color:#666;font-family:'Liberation Mono';transform:scaleX(0.9232);">14</div>
<div class="t" style="left:610.89px;top:314.65px;font-size:11.5px;color:#111;font-family:'Liberation Mono';transform:scaleX(0.9232);-webkit-text-stroke:0.25px;">    <i style="color:#c8262c">initial</i> <i style="color:#c8262c">begin</i></div>
<div class="t" style="left:570.26px;top:328.22px;font-size:11.5px;color:#666;font-family:'Liberation Mono';transform:scaleX(0.9232);">15</div>
<div class="t" style="left:610.89px;top:328.22px;font-size:11.5px;color:#111;font-family:'Liberation Mono';transform:scaleX(0.9232);-webkit-text-stroke:0.25px;">        <i style="color:#1c1c1c">a</i> <i style="color:#3c3ce6">=</i> <i style="color:#9a2ea6">8'd1</i><i style="color:#3c3ce6">;</i></div>
<div class="t" style="left:570.26px;top:341.79px;font-size:11.5px;color:#666;font-family:'Liberation Mono';transform:scaleX(0.9232);">16</div>
<div class="t" style="left:610.89px;top:341.79px;font-size:11.5px;color:#111;font-family:'Liberation Mono';transform:scaleX(0.9232);-webkit-text-stroke:0.25px;">        <i style="color:#1c1c1c">b</i> <i style="color:#3c3ce6">=</i> <i style="color:#9a2ea6">8'd3</i><i style="color:#3c3ce6">;</i></div>
<div class="t" style="left:570.26px;top:355.36px;font-size:11.5px;color:#666;font-family:'Liberation Mono';transform:scaleX(0.9232);">17</div>
<div class="t" style="left:610.89px;top:355.36px;font-size:11.5px;color:#111;font-family:'Liberation Mono';transform:scaleX(0.9232);-webkit-text-stroke:0.25px;">        <i style="color:#3c3ce6">#</i><i style="color:#9a2ea6">20</i><i style="color:#3c3ce6">;</i></div>
<div class="t" style="left:570.26px;top:368.93px;font-size:11.5px;color:#666;font-family:'Liberation Mono';transform:scaleX(0.9232);">18</div>
<div class="t" style="left:610.89px;top:368.93px;font-size:11.5px;color:#111;font-family:'Liberation Mono';transform:scaleX(0.9232);-webkit-text-stroke:0.25px;">        <i style="color:#1c1c1c">a</i> <i style="color:#3c3ce6">=</i> <i style="color:#9a2ea6">8'd10</i><i style="color:#3c3ce6">;</i></div>
<div class="t" style="left:570.26px;top:382.50px;font-size:11.5px;color:#666;font-family:'Liberation Mono';transform:scaleX(0.9232);">19</div>
<div class="t" style="left:610.89px;top:382.50px;font-size:11.5px;color:#111;font-family:'Liberation Mono';transform:scaleX(0.9232);-webkit-text-stroke:0.25px;">        <i style="color:#1c1c1c">b</i> <i style="color:#3c3ce6">=</i> <i style="color:#9a2ea6">8'd33</i><i style="color:#3c3ce6">;</i></div>
<div class="t" style="left:570.26px;top:396.07px;font-size:11.5px;color:#666;font-family:'Liberation Mono';transform:scaleX(0.9232);">20</div>
<div class="t" style="left:610.89px;top:396.07px;font-size:11.5px;color:#111;font-family:'Liberation Mono';transform:scaleX(0.9232);-webkit-text-stroke:0.25px;">        <i style="color:#3c3ce6">#</i><i style="color:#9a2ea6">20</i><i style="color:#3c3ce6">;</i></div>
<div class="t" style="left:570.26px;top:409.64px;font-size:11.5px;color:#666;font-family:'Liberation Mono';transform:scaleX(0.9232);">21</div>
<div class="t" style="left:610.89px;top:409.64px;font-size:11.5px;color:#111;font-family:'Liberation Mono';transform:scaleX(0.9232);-webkit-text-stroke:0.25px;">        <i style="color:#22bec6">$display</i><i style="color:#3c3ce6">(</i><i style="color:#2c6c84">"DONE!"</i><i style="color:#3c3ce6">)</i><i style="color:#3c3ce6">;</i></div>
<div class="t" style="left:570.26px;top:423.21px;font-size:11.5px;color:#666;font-family:'Liberation Mono';transform:scaleX(0.9232);">22</div>
<div class="t" style="left:610.89px;top:423.21px;font-size:11.5px;color:#111;font-family:'Liberation Mono';transform:scaleX(0.9232);-webkit-text-stroke:0.25px;">    <i style="color:#c8262c">end</i></div>
<div class="t" style="left:570.26px;top:436.78px;font-size:11.5px;color:#666;font-family:'Liberation Mono';transform:scaleX(0.9232);">23</div>
<div class="t" style="left:570.26px;top:450.35px;font-size:11.5px;color:#666;font-family:'Liberation Mono';transform:scaleX(0.9232);">24</div>
<div class="t" style="left:610.89px;top:450.35px;font-size:11.5px;color:#111;font-family:'Liberation Mono';transform:scaleX(0.9232);-webkit-text-stroke:0.25px;">    <i style="color:#1c1c1c">mult</i> <i style="color:#3c3ce6">#</i><i style="color:#3c3ce6">(</i></div>
<div class="t" style="left:570.26px;top:463.92px;font-size:11.5px;color:#666;font-family:'Liberation Mono';transform:scaleX(0.9232);">25</div>
<div class="t" style="left:610.89px;top:463.92px;font-size:11.5px;color:#111;font-family:'Liberation Mono';transform:scaleX(0.9232);-webkit-text-stroke:0.25px;">        <i style="color:#3c3ce6">.</i><i style="color:#1c1c1c">A_regs</i><i style="color:#3c3ce6">(</i><i style="color:#9a2ea6">2</i><i style="color:#3c3ce6">)</i><i style="color:#3c3ce6">,</i></div>
<div class="t" style="left:570.26px;top:477.49px;font-size:11.5px;color:#666;font-family:'Liberation Mono';transform:scaleX(0.9232);">26</div>
<div class="t" style="left:610.89px;top:477.49px;font-size:11.5px;color:#111;font-family:'Liberation Mono';transform:scaleX(0.9232);-webkit-text-stroke:0.25px;">        <i style="color:#3c3ce6">.</i><i style="color:#1c1c1c">A_WIDTH</i><i style="color:#3c3ce6">(</i><i style="color:#1c1c1c">DATA_WIDTH</i><i style="color:#3c3ce6">)</i><i style="color:#3c3ce6">,</i></div>
<div class="t" style="left:570.26px;top:491.06px;font-size:11.5px;color:#666;font-family:'Liberation Mono';transform:scaleX(0.9232);">27</div>
<div class="t" style="left:610.89px;top:491.06px;font-size:11.5px;color:#111;font-family:'Liberation Mono';transform:scaleX(0.9232);-webkit-text-stroke:0.25px;">        <i style="color:#3c3ce6">.</i><i style="color:#1c1c1c">B_regs</i><i style="color:#3c3ce6">(</i><i style="color:#9a2ea6">2</i><i style="color:#3c3ce6">)</i><i style="color:#3c3ce6">,</i></div>
<div class="t" style="left:570.26px;top:504.63px;font-size:11.5px;color:#666;font-family:'Liberation Mono';transform:scaleX(0.9232);">28</div>
<div class="t" style="left:610.89px;top:504.63px;font-size:11.5px;color:#111;font-family:'Liberation Mono';transform:scaleX(0.9232);-webkit-text-stroke:0.25px;">        <i style="color:#3c3ce6">.</i><i style="color:#1c1c1c">B_WIDTH</i><i style="color:#3c3ce6">(</i><i style="color:#1c1c1c">DATA_WIDTH</i><i style="color:#3c3ce6">)</i></div>
<div class="t" style="left:570.26px;top:518.20px;font-size:11.5px;color:#666;font-family:'Liberation Mono';transform:scaleX(0.9232);">29</div>
<div class="t" style="left:610.89px;top:518.20px;font-size:11.5px;color:#111;font-family:'Liberation Mono';transform:scaleX(0.9232);-webkit-text-stroke:0.25px;">    <i style="color:#3c3ce6">)</i> <i style="color:#1c1c1c">mult_i</i> <i style="color:#3c3ce6">(</i></div>
<div class="t" style="left:570.26px;top:531.77px;font-size:11.5px;color:#666;font-family:'Liberation Mono';transform:scaleX(0.9232);">30</div>
<div class="t" style="left:610.89px;top:531.77px;font-size:11.5px;color:#111;font-family:'Liberation Mono';transform:scaleX(0.9232);-webkit-text-stroke:0.25px;">        <i style="color:#3c3ce6">.</i><i style="color:#1c1c1c">clk</i><i style="color:#3c3ce6">(</i><i style="color:#1c1c1c">clk</i><i style="color:#3c3ce6">)</i><i style="color:#3c3ce6">,</i></div>
<div class="t" style="left:570.26px;top:545.34px;font-size:11.5px;color:#666;font-family:'Liberation Mono';transform:scaleX(0.9232);">31</div>
<div class="t" style="left:610.89px;top:545.34px;font-size:11.5px;color:#111;font-family:'Liberation Mono';transform:scaleX(0.9232);-webkit-text-stroke:0.25px;">        <i style="color:#3c3ce6">.</i><i style="color:#1c1c1c">enable</i><i style="color:#3c3ce6">(</i><i style="color:#9a2ea6">1'b1</i><i style="color:#3c3ce6">)</i><i style="color:#3c3ce6">,</i></div>
<div class="t" style="left:570.26px;top:558.91px;font-size:11.5px;color:#666;font-family:'Liberation Mono';transform:scaleX(0.9232);">32</div>
<div class="t" style="left:610.89px;top:558.91px;font-size:11.5px;color:#111;font-family:'Liberation Mono';transform:scaleX(0.9232);-webkit-text-stroke:0.25px;">        <i style="color:#3c3ce6">.</i><i style="color:#1c1c1c">A</i><i style="color:#3c3ce6">(</i><i style="color:#1c1c1c">a</i><i style="color:#3c3ce6">)</i><i style="color:#3c3ce6">,</i></div>
<div class="t" style="left:570.26px;top:572.48px;font-size:11.5px;color:#666;font-family:'Liberation Mono';transform:scaleX(0.9232);">33</div>
<div class="t" style="left:610.89px;top:572.48px;font-size:11.5px;color:#111;font-family:'Liberation Mono';transform:scaleX(0.9232);-webkit-text-stroke:0.25px;">        <i style="color:#3c3ce6">.</i><i style="color:#1c1c1c">A_reset</i><i style="color:#3c3ce6">(</i><i style="color:#1c1c1c">reset</i><i style="color:#3c3ce6">)</i><i style="color:#3c3ce6">,</i></div>
<div class="t" style="left:570.26px;top:586.05px;font-size:11.5px;color:#666;font-family:'Liberation Mono';transform:scaleX(0.9232);">34</div>
<div class="t" style="left:610.89px;top:586.05px;font-size:11.5px;color:#111;font-family:'Liberation Mono';transform:scaleX(0.9232);-webkit-text-stroke:0.25px;">        <i style="color:#3c3ce6">.</i><i style="color:#1c1c1c">B</i><i style="color:#3c3ce6">(</i><i style="color:#1c1c1c">b</i><i style="color:#3c3ce6">)</i><i style="color:#3c3ce6">,</i></div>
<div class="t" style="left:570.26px;top:599.62px;font-size:11.5px;color:#666;font-family:'Liberation Mono';transform:scaleX(0.9232);">35</div>
<div class="t" style="left:610.89px;top:599.62px;font-size:11.5px;color:#111;font-family:'Liberation Mono';transform:scaleX(0.9232);-webkit-text-stroke:0.25px;">        <i style="color:#3c3ce6">.</i><i style="color:#1c1c1c">B_reset</i><i style="color:#3c3ce6">(</i><i style="color:#1c1c1c">reset</i><i style="color:#3c3ce6">)</i><i style="color:#3c3ce6">,</i></div>
<div class="t" style="left:570.26px;top:613.19px;font-size:11.5px;color:#666;font-family:'Liberation Mono';transform:scaleX(0.9232);">36</div>
<div class="t" style="left:610.89px;top:613.19px;font-size:11.5px;color:#111;font-family:'Liberation Mono';transform:scaleX(0.9232);-webkit-text-stroke:0.25px;">        <i style="color:#3c3ce6">.</i><i style="color:#1c1c1c">C</i><i style="color:#3c3ce6">(</i><i style="color:#9a2ea6">0</i><i style="color:#3c3ce6">)</i><i style="color:#3c3ce6">,</i></div>
<div class="t" style="left:570.26px;top:626.76px;font-size:11.5px;color:#666;font-family:'Liberation Mono';transform:scaleX(0.9232);">37</div>
<div class="t" style="left:610.89px;top:626.76px;font-size:11.5px;color:#111;font-family:'Liberation Mono';transform:scaleX(0.9232);-webkit-text-stroke:0.25px;">        <i style="color:#3c3ce6">.</i><i style="color:#1c1c1c">C_reset</i><i style="color:#3c3ce6">(</i><i style="color:#1c1c1c">reset</i><i style="color:#3c3ce6">)</i><i style="color:#3c3ce6">,</i></div>
<div class="t" style="left:570.26px;top:640.33px;font-size:11.5px;color:#666;font-family:'Liberation Mono';transform:scaleX(0.9232);">38</div>
<div class="t" style="left:610.89px;top:640.33px;font-size:11.5px;color:#111;font-family:'Liberation Mono';transform:scaleX(0.9232);-webkit-text-stroke:0.25px;">        <i style="color:#3c3ce6">.</i><i style="color:#1c1c1c">M_reset</i><i style="color:#3c3ce6">(</i><i style="color:#1c1c1c">reset</i><i style="color:#3c3ce6">)</i><i style="color:#3c3ce6">,</i></div>
<div class="t" style="left:570.26px;top:653.90px;font-size:11.5px;color:#666;font-family:'Liberation Mono';transform:scaleX(0.9232);">39</div>
<div class="t" style="left:610.89px;top:653.90px;font-size:11.5px;color:#111;font-family:'Liberation Mono';transform:scaleX(0.9232);-webkit-text-stroke:0.25px;">        <i style="color:#3c3ce6">.</i><i style="color:#1c1c1c">P</i><i style="color:#3c3ce6">(</i><i style="color:#3c3ce6">)</i><i style="color:#3c3ce6">,</i></div>
<div class="t" style="left:570.26px;top:667.47px;font-size:11.5px;color:#666;font-family:'Liberation Mono';transform:scaleX(0.9232);">40</div>
<div class="t" style="left:610.89px;top:667.47px;font-size:11.5px;color:#111;font-family:'Liberation Mono';transform:scaleX(0.9232);-webkit-text-stroke:0.25px;">        <i style="color:#3c3ce6">.</i><i style="color:#1c1c1c">P_reset</i><i style="color:#3c3ce6">(</i><i style="color:#1c1c1c">reset</i><i style="color:#3c3ce6">)</i></div>
<div class="t" style="left:570.26px;top:681.04px;font-size:11.5px;color:#666;font-family:'Liberation Mono';transform:scaleX(0.9232);">41</div>
<div class="t" style="left:610.89px;top:681.04px;font-size:11.5px;color:#111;font-family:'Liberation Mono';transform:scaleX(0.9232);-webkit-text-stroke:0.25px;">    <i style="color:#3c3ce6">)</i><i style="color:#3c3ce6">;</i></div>
<div class="t" style="left:570.26px;top:694.61px;font-size:11.5px;color:#666;font-family:'Liberation Mono';transform:scaleX(0.9232);">42</div>
<div class="t" style="left:570.26px;top:708.18px;font-size:11.5px;color:#666;font-family:'Liberation Mono';transform:scaleX(0.9232);">43</div>
<div class="t" style="left:610.89px;top:708.18px;font-size:11.5px;color:#111;font-family:'Liberation Mono';transform:scaleX(0.9232);-webkit-text-stroke:0.25px;"><i style="color:#c8262c">endmodule</i></div>
<div style="left:611px;top:157px;width:1.3px;height:14px;background:#111"></div>
<div style="left:4px;top:782px;width:865px;height:5px;background:linear-gradient(#d4d4d4,#ececec 40%,#e0e0e0)"></div>
<div style="left:4px;top:786.5px;width:865px;height:16.5px;background:#fff;border-top:1px solid #a0a0a0"></div>
<div class="t" style="left:21.85px;top:795.67px;font-size:9.9px;color:#111;font-family:'Liberation Sans';transform:scaleX(0.7610);">Transcript</div>
<div style="left:7px;top:803px;width:862px;height:196px;background:#fff;border-left:1px solid #7a7a7a;border-top:1px solid #7a7a7a"></div>
<svg style="left:4px;top:101px" width="18" height="18" viewBox="0 0 18 18"><path d="M2.5 4v6M3.5 3.5v6" stroke="#a8b0e0" stroke-dasharray="1 1"/><path d="M7 5h4.5M7.5 7h4M8 9h3.5M8 11h3" stroke="#a0a8d8" stroke-width="1.1"/><path d="M6.3 12L7 4.5Q7.3 3 9 3h4.5Q15 3 15 4.8V12.5" fill="none" stroke="#505050" stroke-width="1.1"/><path d="M6 12.5h8" stroke="#777" stroke-width=".8"/><circle cx="5.3" cy="12.5" r="2.1" fill="#10c070" stroke="#000" stroke-width="1.2"/><circle cx="13.1" cy="13.3" r="1.7" fill="#10c070" stroke="#000" stroke-width="1.1"/></svg>
<div style="left:74px;top:108px;width:39.8px;height:2px;background:#c6c6c6;border-radius:1px"></div>
<div style="left:127.6px;top:108px;width:39.400000000000006px;height:2px;background:#c6c6c6;border-radius:1px"></div>
<div style="left:74px;top:112px;width:39.8px;height:2px;background:#c6c6c6;border-radius:1px"></div>
<div style="left:127.6px;top:112px;width:39.400000000000006px;height:2px;background:#c6c6c6;border-radius:1px"></div>
<svg style="left:113.8px;top:108px" width="14" height="6" viewBox="0 0 14 6"><rect x="0.15" y="-0.10" width="1.1" height="1.2" fill="#666"/><rect x="2.50" y="-0.10" width="1.1" height="1.2" fill="#666"/><rect x="4.85" y="-0.10" width="1.1" height="1.2" fill="#666"/><rect x="7.20" y="-0.10" width="1.1" height="1.2" fill="#666"/><rect x="9.55" y="-0.10" width="1.1" height="1.2" fill="#666"/><rect x="11.90" y="-0.10" width="1.1" height="1.2" fill="#666"/><rect x="1.35" y="1.90" width="1.1" height="1.2" fill="#666"/><rect x="3.70" y="1.90" width="1.1" height="1.2" fill="#666"/><rect x="6.05" y="1.90" width="1.1" height="1.2" fill="#666"/><rect x="8.40" y="1.90" width="1.1" height="1.2" fill="#666"/><rect x="10.75" y="1.90" width="1.1" height="1.2" fill="#666"/><rect x="13.10" y="1.90" width="1.1" height="1.2" fill="#666"/><rect x="0.15" y="4.40" width="1.1" height="1.2" fill="#666"/><rect x="2.50" y="4.40" width="1.1" height="1.2" fill="#666"/><rect x="4.85" y="4.40" width="1.1" height="1.2" fill="#666"/><rect x="7.20" y="4.40" width="1.1" height="1.2" fill="#666"/><rect x="9.55" y="4.40" width="1.1" height="1.2" fill="#666"/><rect x="11.90" y="4.40" width="1.1" height="1.2" fill="#666"/></svg>
<div style="left:171.4px;top:105px;width:9.5px;height:10px;background:#fff;box-shadow:1px 1px 0 #d8d8d8"></div>
<div style="left:185.5px;top:105px;width:9.5px;height:10px;background:#fff;box-shadow:1px 1px 0 #d8d8d8"></div>
<div style="left:200.5px;top:105px;width:9.5px;height:10px;background:#fff;box-shadow:1px 1px 0 #d8d8d8"></div>
<svg style="left:172.4px;top:105.8px" width="8" height="8" viewBox="0 0 8 8"><path d="M4 .8v6.4M.8 4h6.4" stroke="#000" stroke-width="1.7"/></svg>
<svg style="left:186.5px;top:105.8px" width="8" height="8" viewBox="0 0 8 8"><rect x="1" y="3.5" width="4" height="4" fill="none" stroke="#222" stroke-width="1.2"/><path d="M3 5l4-4M4 1h3.5v3.5" fill="none" stroke="#111" stroke-width="1.4"/></svg>
<svg style="left:201.5px;top:105.8px" width="8" height="8" viewBox="0 0 8 8"><path d="M1 1l6 6M7 1L1 7" stroke="#000" stroke-width="1.3"/></svg>
<div style="left:7.5px;top:119.5px;width:10px;height:10.5px;background:#fff;border:1px solid #e4e4e4;border-right-color:#b0b0b0;border-bottom-color:#b0b0b0"></div>
<svg style="left:9.5px;top:122.0px" width="6" height="6" viewBox="0 0 6 6"><path d="M0 .5h6L3 5.5z" fill="#333"/></svg>
<div style="left:18px;top:117px;width:1px;height:13px;background:#d0d0d0"></div>
<div style="left:10.3px;top:135.6px;width:9px;height:9px;background:linear-gradient(#fff,#d4d8e8);border:1px solid #a8aec8;border-radius:2px"></div>
<div style="left:12.8px;top:139.5px;width:4px;height:1.2px;background:#333"></div>
<div style="left:19.3px;top:139.5px;width:4.7px;height:1px;background:repeating-linear-gradient(90deg,#bbb 0 1px,transparent 1px 2px)"></div>
<div style="left:29px;top:145px;width:1px;height:8px;background:repeating-linear-gradient(#bbb 0 1px,transparent 1px 2px)"></div>
<div style="left:29px;top:152px;width:9px;height:1px;background:repeating-linear-gradient(90deg,#bbb 0 1px,transparent 1px 2px)"></div>
<svg style="left:24px;top:134.8px" width="10" height="10" viewBox="0 0 10 10"><rect width="10" height="10" fill="#0a5c92"/><path d="M0 0H10L8 2H2V8L0 10z" fill="#a8ecff"/><rect x="2" y="2" width="6" height="6" fill="#22b6ea"/><path d="M8 2L10 0M0 10L2 8" stroke="#111" stroke-width=".9"/></svg>
<svg style="left:38.4px;top:147.5px" width="10" height="10" viewBox="0 0 10 10"><rect width="10" height="10" fill="#0a5c92"/><path d="M0 0H10L8 2H2V8L0 10z" fill="#a8ecff"/><rect x="2" y="2" width="6" height="6" fill="#22b6ea"/><path d="M8 2L10 0M0 10L2 8" stroke="#111" stroke-width=".9"/></svg>
<svg style="left:221px;top:103px" width="14" height="14" viewBox="0 0 14 14"><path d="M1 5l4-4 2 1-4 4z" fill="#b020d0"/><rect x="6" y="6" width="7" height="5" fill="#20a030"/><circle cx="8" cy="6.5" r="3" fill="#20d8f0"/><path d="M5 7l4 4-4 3.5L.5 11z" fill="#1040e0"/></svg>
<div style="left:268px;top:108px;width:113px;height:2px;background:#c6c6c6;border-radius:1px"></div>
<div style="left:396px;top:108px;width:111px;height:2px;background:#c6c6c6;border-radius:1px"></div>
<div style="left:268px;top:112px;width:113px;height:2px;background:#c6c6c6;border-radius:1px"></div>
<div style="left:396px;top:112px;width:111px;height:2px;background:#c6c6c6;border-radius:1px"></div>
<svg style="left:381px;top:108px" width="15" height="6" viewBox="0 0 15 6"><rect x="0.15" y="-0.10" width="1.1" height="1.2" fill="#666"/><rect x="2.50" y="-0.10" width="1.1" height="1.2" fill="#666"/><rect x="4.85" y="-0.10" width="1.1" height="1.2" fill="#666"/><rect x="7.20" y="-0.10" width="1.1" height="1.2" fill="#666"/><rect x="9.55" y="-0.10" width="1.1" height="1.2" fill="#666"/><rect x="11.90" y="-0.10" width="1.1" height="1.2" fill="#666"/><rect x="1.35" y="1.90" width="1.1" height="1.2" fill="#666"/><rect x="3.70" y="1.90" width="1.1" height="1.2" fill="#666"/><rect x="6.05" y="1.90" width="1.1" height="1.2" fill="#666"/><rect x="8.40" y="1.90" width="1.1" height="1.2" fill="#666"/><rect x="10.75" y="1.90" width="1.1" height="1.2" fill="#666"/><rect x="13.10" y="1.90" width="1.1" height="1.2" fill="#666"/><rect x="0.15" y="4.40" width="1.1" height="1.2" fill="#666"/><rect x="2.50" y="4.40" width="1.1" height="1.2" fill="#666"/><rect x="4.85" y="4.40" width="1.1" height="1.2" fill="#666"/><rect x="7.20" y="4.40" width="1.1" height="1.2" fill="#666"/><rect x="9.55" y="4.40" width="1.1" height="1.2" fill="#666"/><rect x="11.90" y="4.40" width="1.1" height="1.2" fill="#666"/></svg>
<div style="left:511.5px;top:105px;width:9.5px;height:10px;background:#fff;box-shadow:1px 1px 0 #d8d8d8"></div>
<div style="left:526px;top:105px;width:9.5px;height:10px;background:#fff;box-shadow:1px 1px 0 #d8d8d8"></div>
<div style="left:540.5px;top:105px;width:9.5px;height:10px;background:#fff;box-shadow:1px 1px 0 #d8d8d8"></div>
<svg style="left:512.5px;top:105.8px" width="8" height="8" viewBox="0 0 8 8"><path d="M4 .8v6.4M.8 4h6.4" stroke="#000" stroke-width="1.7"/></svg>
<svg style="left:527px;top:105.8px" width="8" height="8" viewBox="0 0 8 8"><rect x="1" y="3.5" width="4" height="4" fill="none" stroke="#222" stroke-width="1.2"/><path d="M3 5l4-4M4 1h3.5v3.5" fill="none" stroke="#111" stroke-width="1.4"/></svg>
<svg style="left:541.5px;top:105.8px" width="8" height="8" viewBox="0 0 8 8"><path d="M1 1l6 6M7 1L1 7" stroke="#000" stroke-width="1.3"/></svg>
<div style="left:223px;top:119.3px;width:10px;height:10.5px;background:#fff;border:1px solid #e4e4e4;border-right-color:#b0b0b0;border-bottom-color:#b0b0b0"></div>
<svg style="left:225px;top:121.8px" width="6" height="6" viewBox="0 0 6 6"><path d="M0 .5h6L3 5.5z" fill="#333"/></svg>
<svg style="left:364px;top:121px" width="6" height="6" viewBox="0 0 6 6"><path d="M.5 .5h5L3 5.5z" fill="none" stroke="#555" stroke-width=".8"/></svg>
<div style="left:372.5px;top:118px;width:1px;height:12px;background:#c0c0c0"></div>
<div style="left:429px;top:118px;width:1px;height:12px;background:#c0c0c0"></div>
<div style="left:480.5px;top:119.5px;width:61.5px;height:10px;background:#e8ede8;border:1px solid #c8ccc8"></div>
<div style="left:494.5px;top:120px;width:1px;height:9px;background:#c8ccc8"></div>
<div style="left:526px;top:120px;width:1px;height:9px;background:#c8ccc8"></div>
<svg style="left:483px;top:120px" width="11" height="9" viewBox="0 0 11 9"><path d="M1.5 1h1.5v7h1.5" fill="none" stroke="#222" stroke-width="1.1"/><path d="M4 4.5h6M6.5 2.5L4.5 4.5l2 2" fill="none" stroke="#444" stroke-width="1"/></svg>
<div style="left:500px;top:121.5px;width:6px;height:6px;background:#ff8a00;border:1px solid #402000"></div>
<div class="t" style="left:508.91px;top:124.67px;font-size:9.9px;color:#a0b0c8;font-family:'Liberation Sans';transform:scaleX(0.7504);">Now</div>
<svg style="left:529px;top:120px" width="11" height="9" viewBox="0 0 11 9"><path d="M1 4.5h5M4 2.5l2 2-2 2" fill="none" stroke="#444" stroke-width="1"/><path d="M9.5 1h-1.5v7h-1.5" fill="none" stroke="#222" stroke-width="1.1"/></svg>
<svg style="left:546.5px;top:122px" width="5" height="7" viewBox="0 0 5 7"><path d="M0 0l4.5 3.5L0 7z" fill="#111"/></svg>
<svg style="left:238px;top:131.5px" width="12" height="13" viewBox="0 0 12 13"><path d="M6 .5L11.5 6.5 6 12.5 .5 6.5z" fill="#1a90d8"/><path d="M6 .5L11.5 6.5H.5z" fill="#60d0ff"/><path d="M6 3L9 6.5 6 10 3 6.5z" fill="#30b8f0"/><path d="M6 .5L3 6.5h3z" fill="#a8ecff"/></svg>
<svg style="left:238px;top:143.5px" width="12" height="13" viewBox="0 0 12 13"><path d="M6 .5L11.5 6.5 6 12.5 .5 6.5z" fill="#1a90d8"/><path d="M6 .5L11.5 6.5H.5z" fill="#60d0ff"/><path d="M6 3L9 6.5 6 10 3 6.5z" fill="#30b8f0"/><path d="M6 .5L3 6.5h3z" fill="#a8ecff"/></svg>
<svg style="left:238px;top:155.5px" width="12" height="13" viewBox="0 0 12 13"><path d="M6 .5L11.5 6.5 6 12.5 .5 6.5z" fill="#1a90d8"/><path d="M6 .5L11.5 6.5H.5z" fill="#60d0ff"/><path d="M6 3L9 6.5 6 10 3 6.5z" fill="#30b8f0"/><path d="M6 .5L3 6.5h3z" fill="#a8ecff"/></svg>
<svg style="left:238px;top:167.5px" width="12" height="13" viewBox="0 0 12 13"><path d="M6 .5L11.5 6.5 6 12.5 .5 6.5z" fill="#1a90d8"/><path d="M6 .5L11.5 6.5H.5z" fill="#60d0ff"/><path d="M6 3L9 6.5 6 10 3 6.5z" fill="#30b8f0"/><path d="M6 .5L3 6.5h3z" fill="#a8ecff"/></svg>
<div style="left:226px;top:159.2px;width:8.5px;height:8px;background:linear-gradient(#fff,#dfe3ee);border:1px solid #9aa0b8;border-radius:1.5px"></div>
<div style="left:228px;top:162.7px;width:4.5px;height:1.1px;background:#000"></div>
<div style="left:229.7px;top:161.0px;width:1.1px;height:4.5px;background:#000"></div>
<div style="left:226px;top:171.2px;width:8.5px;height:8px;background:linear-gradient(#fff,#dfe3ee);border:1px solid #9aa0b8;border-radius:1.5px"></div>
<div style="left:228px;top:174.7px;width:4.5px;height:1.1px;background:#000"></div>
<div style="left:229.7px;top:173.0px;width:1.1px;height:4.5px;background:#000"></div>
<div style="left:234.5px;top:162px;width:3px;height:1px;background:#8088a0"></div>
<div style="left:234.5px;top:174px;width:3px;height:1px;background:#8088a0"></div>
<svg style="left:221.5px;top:488px" width="14" height="14" viewBox="0 0 14 14"><g transform="translate(7 7)"><circle r="5" fill="#4a6a98"/><g fill="#4a6a98"><rect x="-1.5" y="-7" width="3" height="3" transform="rotate(0)"/><rect x="-1.5" y="-7" width="3" height="3" transform="rotate(45)"/><rect x="-1.5" y="-7" width="3" height="3" transform="rotate(90)"/><rect x="-1.5" y="-7" width="3" height="3" transform="rotate(135)"/><rect x="-1.5" y="-7" width="3" height="3" transform="rotate(180)"/><rect x="-1.5" y="-7" width="3" height="3" transform="rotate(225)"/><rect x="-1.5" y="-7" width="3" height="3" transform="rotate(270)"/><rect x="-1.5" y="-7" width="3" height="3" transform="rotate(315)"/></g><circle r="2.2" fill="#fff"/><circle r="1.3" fill="#4a6a98"/></g></svg>
<div style="left:318px;top:493px;width:87px;height:2px;background:#c6c6c6;border-radius:1px"></div>
<div style="left:420px;top:493px;width:87px;height:2px;background:#c6c6c6;border-radius:1px"></div>
<div style="left:318px;top:497px;width:87px;height:2px;background:#c6c6c6;border-radius:1px"></div>
<div style="left:420px;top:497px;width:87px;height:2px;background:#c6c6c6;border-radius:1px"></div>
<svg style="left:405px;top:493px" width="15" height="6" viewBox="0 0 15 6"><rect x="0.15" y="-0.10" width="1.1" height="1.2" fill="#666"/><rect x="2.50" y="-0.10" width="1.1" height="1.2" fill="#666"/><rect x="4.85" y="-0.10" width="1.1" height="1.2" fill="#666"/><rect x="7.20" y="-0.10" width="1.1" height="1.2" fill="#666"/><rect x="9.55" y="-0.10" width="1.1" height="1.2" fill="#666"/><rect x="11.90" y="-0.10" width="1.1" height="1.2" fill="#666"/><rect x="1.35" y="1.90" width="1.1" height="1.2" fill="#666"/><rect x="3.70" y="1.90" width="1.1" height="1.2" fill="#666"/><rect x="6.05" y="1.90" width="1.1" height="1.2" fill="#666"/><rect x="8.40" y="1.90" width="1.1" height="1.2" fill="#666"/><rect x="10.75" y="1.90" width="1.1" height="1.2" fill="#666"/><rect x="13.10" y="1.90" width="1.1" height="1.2" fill="#666"/><rect x="0.15" y="4.40" width="1.1" height="1.2" fill="#666"/><rect x="2.50" y="4.40" width="1.1" height="1.2" fill="#666"/><rect x="4.85" y="4.40" width="1.1" height="1.2" fill="#666"/><rect x="7.20" y="4.40" width="1.1" height="1.2" fill="#666"/><rect x="9.55" y="4.40" width="1.1" height="1.2" fill="#666"/><rect x="11.90" y="4.40" width="1.1" height="1.2" fill="#666"/></svg>
<div style="left:511px;top:490px;width:9.5px;height:10px;background:#fff;box-shadow:1px 1px 0 #d8d8d8"></div>
<div style="left:526px;top:490px;width:9.5px;height:10px;background:#fff;box-shadow:1px 1px 0 #d8d8d8"></div>
<div style="left:540.5px;top:490px;width:9.5px;height:10px;background:#fff;box-shadow:1px 1px 0 #d8d8d8"></div>
<svg style="left:512px;top:490.8px" width="8" height="8" viewBox="0 0 8 8"><path d="M4 .8v6.4M.8 4h6.4" stroke="#000" stroke-width="1.7"/></svg>
<svg style="left:527px;top:490.8px" width="8" height="8" viewBox="0 0 8 8"><rect x="1" y="3.5" width="4" height="4" fill="none" stroke="#222" stroke-width="1.2"/><path d="M3 5l4-4M4 1h3.5v3.5" fill="none" stroke="#111" stroke-width="1.4"/></svg>
<svg style="left:541.5px;top:490.8px" width="8" height="8" viewBox="0 0 8 8"><path d="M1 1l6 6M7 1L1 7" stroke="#000" stroke-width="1.3"/></svg>
<div style="left:222.8px;top:505px;width:10px;height:10.5px;background:#fff;border:1px solid #e4e4e4;border-right-color:#b0b0b0;border-bottom-color:#b0b0b0"></div>
<svg style="left:224.8px;top:507.5px" width="6" height="6" viewBox="0 0 6 6"><path d="M0 .5h6L3 5.5z" fill="#333"/></svg>
<div style="left:327.3px;top:504px;width:1px;height:12px;background:#c0c0c0"></div>
<div style="left:408px;top:504px;width:1px;height:12px;background:#c0c0c0"></div>
<div style="left:452.5px;top:504px;width:1px;height:12px;background:#c0c0c0"></div>
<div style="left:484.3px;top:504px;width:1px;height:12px;background:#c0c0c0"></div>
<svg style="left:562.8px;top:104.4px" width="10" height="12" viewBox="0 0 10 12"><rect x="0" y="0" width="9" height="11" fill="#fff"/><path d="M7 .5h2v10.5H.5" fill="none" stroke="#222" stroke-width="1"/><path d="M2.5 2v7.5M2.5 5.5c1-1.3 3.5-1.3 3.5.5v3.5" fill="none" stroke="#1010f0" stroke-width="1.7"/></svg>
<div style="left:599.2px;top:117.5px;width:1px;height:12.0px;background:#c0c0c0"></div>
<div style="left:603.2px;top:167px;width:1px;height:526px;background:#888"></div>
<div style="left:600px;top:160.44px;width:7px;height:7px;background:#fff;border:1px solid #888"></div>
<div style="left:601.5px;top:163.44px;width:4px;height:1px;background:#555"></div>
<div style="left:600px;top:309.71000000000004px;width:7px;height:7px;background:#fff;border:1px solid #888"></div>
<div style="left:601.5px;top:312.71000000000004px;width:4px;height:1px;background:#555"></div>
<div style="left:600px;top:445.41px;width:7px;height:7px;background:#fff;border:1px solid #888"></div>
<div style="left:601.5px;top:448.41px;width:4px;height:1px;background:#555"></div>
<div style="left:603.5px;top:422.37000000000006px;width:4px;height:1px;background:#888"></div>
<div style="left:603.5px;top:680.1999999999999px;width:4px;height:1px;background:#888"></div>
<div style="left:603.5px;top:692.5px;width:4.5px;height:1px;background:#888"></div>
<svg style="left:6px;top:752px" width="10" height="10" viewBox="0 0 10 10"><path d="M9 1L1 5l8 4z" fill="#f8f8f8" stroke="#bbb" stroke-width=".8"/></svg>
<svg style="left:203px;top:752px" width="10" height="10" viewBox="0 0 10 10"><path d="M1 1l8 4-8 4z" fill="#f8f8f8" stroke="#bbb" stroke-width=".8"/></svg>
<svg style="left:222px;top:771px" width="10" height="9" viewBox="0 0 10 9"><path d="M9 1L1 4.5 9 8z" fill="#f0f0f0" stroke="#bbb" stroke-width=".8"/></svg>
<svg style="left:543px;top:771px" width="10" height="9" viewBox="0 0 10 9"><path d="M1 1l8 3.5L1 8z" fill="#f0f0f0" stroke="#bbb" stroke-width=".8"/></svg>
<svg style="left:563px;top:752px" width="8" height="10" viewBox="0 0 8 10"><path d="M7 1L1 5l6 4z" fill="#f0f0f0" stroke="#aaa" stroke-width=".8"/></svg>
<div style="left:197px;top:765px;width:8.5px;height:13px;background:#fff;box-shadow:1px 1px 0 #ccc"></div>
<div style="left:206.5px;top:765px;width:8.5px;height:13px;background:#fff;box-shadow:1px 1px 0 #ccc"></div>
<svg style="left:199px;top:768px" width="5" height="7" viewBox="0 0 5 7"><path d="M4.5 0v7L0 3.5z" fill="#444"/></svg>
<svg style="left:208.5px;top:768px" width="5" height="7" viewBox="0 0 5 7"><path d="M0 0v7l4.5-3.5z" fill="#444"/></svg>
<svg style="left:8px;top:765.5px" width="13" height="14" viewBox="0 0 13 14"><path d="M1 12.5l1.5-1.5h8l1.5 1.5z" fill="#000"/><path d="M.5 12.8h12" stroke="#000" stroke-width="1.2"/><rect x="2.3" y="4" width="2" height="7.5" fill="#18c878"/><rect x="4.5" y="1.5" width="2" height="10" fill="#c8106a"/><rect x="6.7" y="4.5" width="2" height="7" fill="#18a8e8"/><rect x="8.9" y="3" width="2" height="8.5" fill="#d8c818"/><path d="M5.5 1v1" stroke="#000"/></svg>
<svg style="left:63.5px;top:764px" width="18" height="18" viewBox="0 0 18 18"><path d="M2.5 4v6M3.5 3.5v6" stroke="#a8b0e0" stroke-dasharray="1 1"/><path d="M7 5h4.5M7.5 7h4M8 9h3.5M8 11h3" stroke="#a0a8d8" stroke-width="1.1"/><path d="M6.3 12L7 4.5Q7.3 3 9 3h4.5Q15 3 15 4.8V12.5" fill="none" stroke="#505050" stroke-width="1.1"/><path d="M6 12.5h8" stroke="#777" stroke-width=".8"/><circle cx="5.3" cy="12.5" r="2.1" fill="#10c070" stroke="#000" stroke-width="1.2"/><circle cx="13.1" cy="13.3" r="1.7" fill="#10c070" stroke="#000" stroke-width="1.1"/></svg>
<svg style="left:51.5px;top:769px" width="7" height="7" viewBox="0 0 7 7"><path d="M.5.5l6 6M6.5.5l-6 6" stroke="#bbb" stroke-width="1.3"/></svg>
<svg style="left:104px;top:769px" width="7" height="7" viewBox="0 0 7 7"><path d="M.5.5l6 6M6.5.5l-6 6" stroke="#bbb" stroke-width="1.3"/></svg>
<svg style="left:564px;top:767px" width="12" height="12" viewBox="0 0 12 12"><rect x=".5" y=".5" width="11" height="11" fill="#203030" stroke="#222"/><path d="M2 4h2v4h2V4h2v4h2" fill="none" stroke="#20e060" stroke-width="1"/><path d="M2 9.5h8" stroke="#40c0ff" stroke-width=".8"/></svg>
<svg style="left:618.5px;top:767px" width="10" height="12" viewBox="0 0 10 12"><rect x=".5" y=".5" width="9" height="11" fill="#fff" stroke="#222"/><path d="M9.5 2v10H2" fill="none" stroke="#777"/><path d="M3 2.5v7M3 6c1-1.2 3.5-1.2 3.5.5v3" fill="none" stroke="#1010e0" stroke-width="1.5"/></svg>
<svg style="left:677px;top:767px" width="10" height="12" viewBox="0 0 10 12"><rect x=".5" y=".5" width="9" height="11" fill="#fff" stroke="#222"/><path d="M9.5 2v10H2" fill="none" stroke="#777"/><path d="M3 2.5v7M3 6c1-1.2 3.5-1.2 3.5.5v3" fill="none" stroke="#1010e0" stroke-width="1.5"/></svg>
<svg style="left:604.5px;top:769px" width="7" height="7" viewBox="0 0 7 7"><path d="M.5.5l6 6M6.5.5l-6 6" stroke="#bbb" stroke-width="1.3"/></svg>
<svg style="left:662px;top:769px" width="7" height="7" viewBox="0 0 7 7"><path d="M.5.5l6 6M6.5.5l-6 6" stroke="#bbb" stroke-width="1.3"/></svg>
<svg style="left:730px;top:769px" width="7" height="7" viewBox="0 0 7 7"><path d="M.5.5l6 6M6.5.5l-6 6" stroke="#bbb" stroke-width="1.3"/></svg>
<svg style="left:7px;top:789px" width="12" height="13" viewBox="0 0 12 13"><defs><linearGradient id="tg" x1="0" x2="1"><stop offset="0" stop-color="#555"/><stop offset=".5" stop-color="#ddd"/><stop offset="1" stop-color="#555"/></linearGradient></defs><path d="M1 12V5.5C1 2.5 3 .8 6 .8s5 1.7 5 4.7V12l-2-1.5V6c0-1.5-1-2.5-3-2.5S3 4.5 3 6v4.5z" fill="url(#tg)" stroke="#444" stroke-width=".6"/></svg>
<div style="left:61px;top:793px;width:1939px;height:2px;background:#c6c6c6;border-radius:1px"></div>
<div style="left:2001px;top:793px;width:-1121px;height:2px;background:#c6c6c6;border-radius:1px"></div>
<div style="left:61px;top:797px;width:1939px;height:2px;background:#c6c6c6;border-radius:1px"></div>
<div style="left:2001px;top:797px;width:-1121px;height:2px;background:#c6c6c6;border-radius:1px"></div>
<svg style="left:2000px;top:793px" width="1" height="6" viewBox="0 0 1 6"><rect x="0.15" y="-0.10" width="1.1" height="1.2" fill="#666"/><rect x="2.50" y="-0.10" width="1.1" height="1.2" fill="#666"/><rect x="4.85" y="-0.10" width="1.1" height="1.2" fill="#666"/><rect x="7.20" y="-0.10" width="1.1" height="1.2" fill="#666"/><rect x="9.55" y="-0.10" width="1.1" height="1.2" fill="#666"/><rect x="11.90" y="-0.10" width="1.1" height="1.2" fill="#666"/><rect x="1.35" y="1.90" width="1.1" height="1.2" fill="#666"/><rect x="3.70" y="1.90" width="1.1" height="1.2" fill="#666"/><rect x="6.05" y="1.90" width="1.1" height="1.2" fill="#666"/><rect x="8.40" y="1.90" width="1.1" height="1.2" fill="#666"/><rect x="10.75" y="1.90" width="1.1" height="1.2" fill="#666"/><rect x="13.10" y="1.90" width="1.1" height="1.2" fill="#666"/><rect x="0.15" y="4.40" width="1.1" height="1.2" fill="#666"/><rect x="2.50" y="4.40" width="1.1" height="1.2" fill="#666"/><rect x="4.85" y="4.40" width="1.1" height="1.2" fill="#666"/><rect x="7.20" y="4.40" width="1.1" height="1.2" fill="#666"/><rect x="9.55" y="4.40" width="1.1" height="1.2" fill="#666"/><rect x="11.90" y="4.40" width="1.1" height="1.2" fill="#666"/></svg>
<div class="t" style="left:9.50px;top:811.80px;font-size:9px;color:#1a1a1a;font-family:'Liberation Mono';transform:scaleX(0.8843);"># //  Questa Intel Starter FPGA Edition-64</div>
<div class="t" style="left:9.50px;top:822.97px;font-size:9px;color:#1a1a1a;font-family:'Liberation Mono';transform:scaleX(0.8843);"># //  Version 2024.3 linux_x86_64 Sep 10 2024</div>
<div class="t" style="left:9.50px;top:834.14px;font-size:9px;color:#1a1a1a;font-family:'Liberation Mono';transform:scaleX(0.8843);"># //</div>
<div class="t" style="left:9.50px;top:845.31px;font-size:9px;color:#1a1a1a;font-family:'Liberation Mono';transform:scaleX(0.8843);"># // Unpublished work. Copyright 2024 Siemens</div>
<div class="t" style="left:9.50px;top:856.48px;font-size:9px;color:#1a1a1a;font-family:'Liberation Mono';transform:scaleX(0.8843);"># //</div>
<div class="t" style="left:9.50px;top:867.65px;font-size:9px;color:#1a1a1a;font-family:'Liberation Mono';transform:scaleX(0.8843);"># // This material contains trade secrets or otherwise confidential information</div>
<div class="t" style="left:9.50px;top:878.82px;font-size:9px;color:#1a1a1a;font-family:'Liberation Mono';transform:scaleX(0.8843);"># // owned by Siemens Industry Software Inc. or its affiliates (collectively,</div>
<div class="t" style="left:9.50px;top:889.99px;font-size:9px;color:#1a1a1a;font-family:'Liberation Mono';transform:scaleX(0.8843);"># // &quot;SISW&quot;), or its licensors. Access to and use of this information is strictly</div>
<div class="t" style="left:9.50px;top:901.16px;font-size:9px;color:#1a1a1a;font-family:'Liberation Mono';transform:scaleX(0.8843);"># // limited as set forth in the Customer's applicable agreements with SISW.</div>
<div class="t" style="left:9.50px;top:912.33px;font-size:9px;color:#1a1a1a;font-family:'Liberation Mono';transform:scaleX(0.8843);"># //</div>
<div class="t" style="left:9.50px;top:923.50px;font-size:9px;color:#1a1a1a;font-family:'Liberation Mono';transform:scaleX(0.8843);"># // This material may not be copied, distributed, or otherwise disclosed outside</div>
<div class="t" style="left:9.50px;top:934.67px;font-size:9px;color:#1a1a1a;font-family:'Liberation Mono';transform:scaleX(0.8843);"># // of the Customer's facilities without the express written permission of SISW,</div>
<div class="t" style="left:9.50px;top:945.84px;font-size:9px;color:#1a1a1a;font-family:'Liberation Mono';transform:scaleX(0.8843);"># // and may not be used in any way not expressly authorized by SISW.</div>
<div class="t" style="left:9.50px;top:957.01px;font-size:9px;color:#1a1a1a;font-family:'Liberation Mono';transform:scaleX(0.8843);"># //</div>
<div class="t" style="left:9.50px;top:968.18px;font-size:9px;color:#1a1a1a;font-family:'Liberation Mono';transform:scaleX(0.8843);"># OpenFile vsim.wlf</div>
<div class="t" style="left:9.66px;top:988.07px;font-size:9.9px;color:#28288c;font-family:'Liberation Sans';transform:scaleX(0.8219);">VSIM 2&gt;</div>
<div style="left:0px;top:0px;width:4px;height:999px;background:#1b1018"></div>
<div style="left:0px;top:0px;width:12px;height:12px;background:#1b1018"></div>
<div style="left:4px;top:0px;width:12px;height:12px;background:#e9e9e9;border-top-left-radius:7px;border-left:1px solid #f4f4f4"></div>
<div style="left:3px;top:12px;width:1px;height:987px;background:#000"></div>
<div style="left:0px;top:298px;width:2px;height:45px;background:#3a3036"></div>
</body></html>
